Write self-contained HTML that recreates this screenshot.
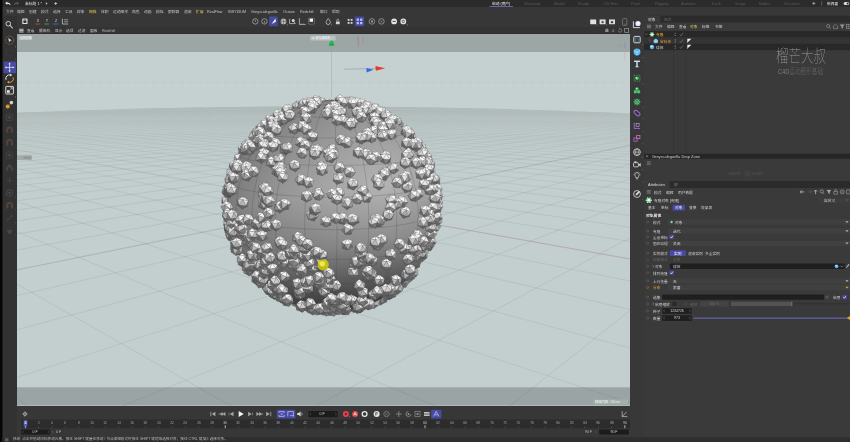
<!DOCTYPE html>
<html lang="zh-CN"><head><meta charset="utf-8"><title>Cinema 4D</title>
<style>
html,body{margin:0;padding:0;background:#383838;}
body{width:850px;height:442px;overflow:hidden;position:relative;font-family:"Liberation Sans","Noto Sans CJK SC",sans-serif;}
#root{position:absolute;left:0;top:0;width:850px;height:442px;overflow:hidden;}
#chrome{position:absolute;left:0;top:0;display:block;}
#txt{position:absolute;left:0;top:0;width:850px;height:442px;will-change:transform;}
.t{position:absolute;white-space:nowrap;line-height:1.24;transform-origin:0 0;transform:scale(.25);letter-spacing:0;}
.tc{transform:scale(.25) translateX(-50%);}
.tr{transform:scale(.25) translateX(-100%);}
.wm{position:absolute;white-space:nowrap;font-family:"Noto Sans CJK SC","Liberation Sans",sans-serif;font-weight:100;font-size:50px;line-height:1;color:#9a9a9a;transform-origin:0 0;transform:scale(.25,.33);letter-spacing:0px;}
.wm2{position:absolute;white-space:nowrap;font-family:"Liberation Sans","Noto Sans CJK SC",sans-serif;font-weight:100;font-size:26px;line-height:1;color:#7e7e7e;transform-origin:0 0;transform:scale(.217,.31);}

</style></head>
<body><div id="root">
<svg id="chrome" width="850" height="442" viewBox="0 0 850 442">
<rect x="0" y="0" width="850" height="442" fill="#383838"/>
<rect x="0" y="0" width="850" height="6.9" fill="#2b2b2b"/>
<rect x="2.5" y="6.9" width="627.5" height="27.2" fill="#373737"/>
<rect x="2.5" y="27.2" width="627.5" height="6.9" fill="#343434"/>
<rect x="2.5" y="33.2" width="627.5" height="1" fill="#2d2d2d"/>
<rect x="2.5" y="16" width="14.5" height="421.5" fill="#323232"/>
<rect x="630" y="16" width="14" height="421.5" fill="#383838"/>
<rect x="644" y="15.6" width="206" height="422" fill="#3a3a3a"/>
<rect x="0" y="0" width="2.5" height="442" fill="#060606"/>
<rect x="17" y="405.5" width="613" height="32" fill="#373737"/>
<rect x="21.2" y="419.6" width="608.8" height="8.6" fill="#2c2c2c"/>
<rect x="2.5" y="437.4" width="847.5" height="4.6" fill="#2e2e2e"/>
<g transform="translate(7.8 3.5)"><path d="M-2.6 -0.4L-0.6 -2V-0.9C1.6 -0.9 2.8 0.2 2.8 2C2.2 0.9 1.2 0.4 -0.6 0.4V1.4z" fill="#e6e6e6"/></g>
<g transform="translate(16.5 3.5) scale(-1 1)"><path d="M-2.6 -0.4L-0.6 -2V-0.9C1.6 -0.9 2.8 0.2 2.8 2C2.2 0.9 1.2 0.4 -0.6 0.4V1.4z" fill="#5a5a5a"/></g>
<path d="M45.9 2.2L47.6 3.5L45.9 4.8z" fill="#d0d0d0"/>
<path d="M54.2 3.5H57.2M55.7 2V5" stroke="#e0e0e0" stroke-width="0.7" fill="none"/>
<rect x="489.5" y="6" width="23.5" height="0.7" fill="#7d80d8"/>
<path d="M812.2 3.4H815.4M813.8 1.8V5" stroke="#cfcfcf" stroke-width="0.6" fill="none"/>
<rect x="821.6" y="1.2" width="0.5" height="4.6" fill="#8a8a8a"/>
<rect x="843.6" y="1.9" width="5.6" height="3" rx="1.5" fill="#dcdcdc"/><circle cx="847.6" cy="3.4" r="1" fill="#2b2b2b"/>
<g transform="translate(9.2 24.6)"><circle cx="-0.9" cy="-0.9" r="2.3" fill="none" stroke="#d8d8d8" stroke-width="0.9"/><path d="M0.9 0.9L3.2 3.4" stroke="#d8d8d8" stroke-width="1.1" stroke-linecap="round"/></g>
<g transform="translate(24.9 21.4)"><rect x="-2.6" y="-2.8" width="5.2" height="5.4" rx="0.5" fill="#e4e4e4"/><rect x="-1.5" y="-1" width="3" height="2.6" fill="#333"/><path d="M-0.9 -1V-1.6A0.9 0.9 0 0 1 0.9 -1.6V-1" fill="none" stroke="#333" stroke-width="0.5"/></g>
<g transform="translate(37.6 21.4)"><path d="M-2.4 2.6H2.4" stroke="#c8473f" stroke-width="0.8"/></g>
<g transform="translate(46.7 21.4)"><path d="M-2.4 2.6H2.4" stroke="#4fa35a" stroke-width="0.8"/></g>
<g transform="translate(55.9 21.4)"><path d="M-2.4 2.6H2.4" stroke="#4a78c8" stroke-width="0.8"/></g>
<g transform="translate(65.2 21.4)"><path d="M-2.8 -2.8V2.6H3" stroke="#d8d8d8" stroke-width="0.7" fill="none"/><path d="M-1 -1.6H2.8M-1 0.4H2.8" stroke="#d8d8d8" stroke-width="0.6"/></g>
<g transform="translate(255.3 21.4)"><circle r="2.7" fill="none" stroke="#b4b4b4" stroke-width="0.7"/><path d="M0 -1.6V0.4" stroke="#c4c4c4" stroke-width="0.6"/></g>
<g transform="translate(264.4 21.4)"><circle r="2.7" fill="none" stroke="#b4b4b4" stroke-width="0.7"/><path d="M0 -0.4V1.6" stroke="#c4c4c4" stroke-width="0.6"/></g>
<rect x="269.2" y="16.6" width="8.6" height="9.6" rx="0.8" fill="#464a9e"/>
<path d="M271.6 24L275.4 18.6L275.9 21.8z" fill="#f2f2f2"/>
<g transform="translate(283.5 21.4)"><circle r="2.9" fill="#bcbcbc"/><path d="M-2.9 0H2.9M0 -2.9V2.9M-2 -2A3.5 3.5 0 0 0 -2 2M2 -2A3.5 3.5 0 0 1 2 2" fill="none" stroke="#4a4a4a" stroke-width="0.45"/><path d="M3.2 3.2L4.2 4.2V3.2z" fill="#bbb"/></g>
<g transform="translate(292.4 21.4)"><path d="M-2.8 -2.6V2.2H2.4" stroke="#d0d0d0" stroke-width="0.7" fill="none"/><circle cx="0.8" cy="-0.8" r="1.5" fill="#d8d8d8"/><path d="M1.6 0.4L3 2.4" stroke="#d8d8d8" stroke-width="0.8"/></g>
<path d="M299.4 18.2V24.4H305.6" stroke="#d8d8d8" stroke-width="0.7" fill="none"/><path d="M301.4 24.4V23.2M303.4 24.4V23.2" stroke="#9a9a9a" stroke-width="0.4"/>
<rect x="308.4" y="18.2" width="6" height="6" rx="0.6" fill="none" stroke="#8c8c8c" stroke-width="0.5"/><rect x="309.6" y="18.6" width="3.4" height="3.2" fill="#f4f4f4"/>
<g transform="translate(328.2 21.4)"><path d="M0 -2.9C1.4 -1 2.1 0 2.1 1A2.1 2.1 0 0 1 -2.1 1C-2.1 0 -1.4 -1 0 -2.9z" fill="none" stroke="#d8d8d8" stroke-width="0.7"/><path d="M2.6 3L3.6 4V3z" fill="#bbb"/></g>
<g transform="translate(337.8 21.6)"><rect x="-1.9" y="-0.2" width="3.8" height="2.8" rx="0.4" fill="#d4d4d4"/><path d="M-1 -0.2V-1.4A1 1 0 0 1 1 -1.4V-0.2" fill="none" stroke="#d4d4d4" stroke-width="0.6"/></g>
<g transform="translate(350.1 21.4)"><rect x="-2.45" y="-2.45" width="1.9" height="1.9" fill="#d2d2d2"/><rect x="-2.45" y="0.55" width="1.9" height="1.9" fill="#d2d2d2"/><rect x="0.55" y="-2.45" width="1.9" height="1.9" fill="#d2d2d2"/><rect x="0.55" y="0.55" width="1.9" height="1.9" fill="#d2d2d2"/></g>
<rect x="354.8" y="16.6" width="9.4" height="9.6" rx="0.8" fill="#464a9e"/>
<g transform="translate(359.5 21.4)"><rect x="-2.85" y="-2.85" width="2.3" height="2.3" fill="#b9bdf2"/><rect x="-2.85" y="0.55" width="2.3" height="2.3" fill="#b9bdf2"/><rect x="0.55" y="-2.85" width="2.3" height="2.3" fill="#b9bdf2"/><rect x="0.55" y="0.55" width="2.3" height="2.3" fill="#b9bdf2"/></g>
<g transform="translate(371.9 21.4)"><circle r="2.8" fill="none" stroke="#9c9c9c" stroke-width="0.8"/><circle r="1.1" fill="#9c9c9c"/></g>
<g transform="translate(381.4 21.4)"><circle r="2.8" fill="none" stroke="#9c9c9c" stroke-width="0.8"/><path d="M-1 -1L1 1M1 -1L-1 1" stroke="#9c9c9c" stroke-width="0.6"/></g>
<g transform="translate(394.1 21.4)"><circle r="2.9" fill="#e2e2e2"/><path d="M-1.5 0H1.5" stroke="#333" stroke-width="0.9"/></g>
<g transform="translate(403.3 21.4)"><circle r="2.9" fill="#e2e2e2"/><circle r="1.2" fill="none" stroke="#333" stroke-width="0.7"/></g>
<path d="M406.6 24.6L407.6 25.6V24.6z" fill="#cfcfcf"/>
<g transform="translate(593.2 22)"><rect x="-3" y="-2.4" width="6" height="4.6" rx="0.4" fill="#e2e2e2"/><path d="M-3 -2.4H3" stroke="#9a9a9a" stroke-width="0.5"/><path d="M3.2 2.6L4.2 3.6V2.6z" fill="#aaa"/></g>
<g transform="translate(602.6 22)"><rect x="-3" y="-2.4" width="6" height="4.6" rx="0.4" fill="#e2e2e2"/><path d="M-3 -2.4H3" stroke="#9a9a9a" stroke-width="0.5"/><circle cy="0.2" r="1.1" fill="#444"/><path d="M3.2 2.6L4.2 3.6V2.6z" fill="#aaa"/></g>
<g transform="translate(612 22)"><rect x="-3" y="-2.4" width="6" height="4.6" rx="0.4" fill="#e2e2e2"/><path d="M-3 -2.4H3" stroke="#9a9a9a" stroke-width="0.5"/><rect x="-1.2" y="-0.8" width="2.4" height="2" fill="#444"/></g>
<rect x="622.6" y="18.6" width="4.2" height="6.8" rx="0.8" fill="none" stroke="#8e8e8e" stroke-width="0.6"/><path d="M623.8 24.2H625.6" stroke="#8e8e8e" stroke-width="0.5"/>
<g transform="translate(606.9 30.5)"><path d="M-1.6 1.4V-0.4A1.6 1.6 0 0 1 1.6 -0.4V1.4z" fill="#8f8f8f"/></g>
<g transform="translate(613.2 30.5)"><path d="M0 -1.8V1.2M-1.4 0L0 1.6L1.4 0" stroke="#8f8f8f" stroke-width="0.6" fill="none"/></g>
<g transform="translate(620 30.5)"><path d="M-1.6 -0.2A1.7 1.7 0 1 0 0 -1.7" stroke="#8f8f8f" stroke-width="0.6" fill="none"/><path d="M0 -2.6L-1.2 -1.7L0 -0.8z" fill="#8f8f8f"/></g>
<g transform="translate(626.7 30.5)"><rect x="-2" y="-2" width="4" height="4" fill="none" stroke="#aaa" stroke-width="0.6"/></g>
<path d="M19.2 29.2H23.6M19.2 30.6H23.6M19.2 32H23.6" stroke="#e8e8e8" stroke-width="0.8"/>
<g transform="translate(9.6 40.2)"><circle r="4.2" fill="none" stroke="#8e7146" stroke-width="0.7" stroke-dasharray="2.2 0.8"/><path d="M-1.3 -2.2L2.2 0.2L0.4 0.5L-0.4 2.2z" fill="#e4e4e4"/></g>
<path d="M15 46.4L16 47.4V46.4z" fill="#9a9a9a"/>
<g transform="translate(9.6 52.8)"><rect x="-3.2" y="-3.2" width="6.4" height="6.4" fill="none" stroke="#474747" stroke-width="0.6" stroke-dasharray="1.4 1"/></g>
<path d="M15 58.8L16 59.8V58.8z" fill="#777"/>
<rect x="3.6" y="61.6" width="12.4" height="11.6" rx="0.8" fill="#474ba2"/>
<g transform="translate(9.6 67.4)"><path d="M0 -4.2V4.2M-4.2 0H4.2" stroke="#dfe1ff" stroke-width="0.8"/><path d="M0 -4.8L-1.2 -3.2H1.2zM0 4.8L-1.2 3.2H1.2zM-4.8 0L-3.2 -1.2V1.2zM4.8 0L3.2 -1.2V1.2z" fill="#dfe1ff"/></g>
<g transform="translate(9.6 78.6)"><path d="M-3.6 1.2A3.8 3.8 0 0 1 1.2 -3.6" fill="none" stroke="#e6e6e6" stroke-width="1"/><path d="M3.6 -1.2A3.8 3.8 0 0 1 -1.2 3.6" fill="none" stroke="#e09a3a" stroke-width="1"/><path d="M0.6 -5L2.6 -3.4L0.6 -2.2z" fill="#e6e6e6"/><path d="M-0.6 5L-2.6 3.4L-0.6 2.2z" fill="#e09a3a"/></g>
<g transform="translate(9.6 90.2)"><rect x="-3.8" y="-3.8" width="7.6" height="7.6" rx="0.5" fill="none" stroke="#e6e6e6" stroke-width="0.9"/><rect x="-2.6" y="0" width="2.8" height="2.6" fill="#e6e6e6"/><path d="M0.4 -0.4L2.4 -2.4M0.8 -2.6H2.6V-0.8" stroke="#e6e6e6" stroke-width="0.6" fill="none"/></g>
<path d="M15 96.6L16 97.6V96.6z" fill="#9a9a9a"/>
<g transform="translate(9.6 104.6)"><circle cx="1.8" cy="-2" r="1.8" fill="#d0d0d0"/><circle cx="-1.9" cy="1.9" r="2" fill="#dc9a30"/><path d="M-0.2 0.2L0.6 -0.6" stroke="#aaa" stroke-width="0.5"/></g>
<g transform="translate(9.6 117.4)"><rect x="-3.2" y="-3.2" width="6.4" height="6.4" rx="0.6" fill="none" stroke="#484848" stroke-width="0.8"/><rect x="-1.4" y="-1.4" width="2.8" height="2.8" fill="#484848"/></g>
<g transform="translate(9.6 130)"><path d="M-3.4 2.8V-0.4A3.4 3.4 0 0 1 3.4 -0.4V2.8H1.4V-0.2A1.4 1.4 0 0 0 -1.4 -0.2V2.8z" fill="#50443c"/></g>
<g transform="translate(9.6 142.6)"><path d="M-3.4 2.8V-0.4A3.4 3.4 0 0 1 3.4 -0.4V2.8H1.4V-0.2A1.4 1.4 0 0 0 -1.4 -0.2V2.8z" fill="#50443c"/></g>
<g transform="translate(9.6 155.2)"><rect x="-3.2" y="-3.2" width="6.4" height="6.4" rx="0.6" fill="none" stroke="#464646" stroke-width="0.8"/><rect x="-1.4" y="-1.4" width="2.8" height="2.8" fill="#464646"/></g>
<g transform="translate(9.6 167.8)"><path d="M-3.4 2.6C-3 -1.6 -0.8 -3.2 0 -3.2C0.8 -3.2 3 -1.6 3.4 2.6L1.6 2.6C1.2 0 0.6 -1.2 0 -1.2C-0.6 -1.2 -1.2 0 -1.6 2.6z" fill="#484848"/></g>
<g transform="translate(9.6 180.4)"><path d="M0 -3V3M-3 0H3" stroke="#454545" stroke-width="0.8"/></g>
<g transform="translate(9.6 193)"><circle r="3.2" fill="none" stroke="#4c4c4c" stroke-width="0.9"/><circle r="1.2" fill="#4c4c4c"/><path d="M5.4 3.8L6.4 4.8V3.8z" fill="#6a6a6a"/></g>
<g transform="translate(9.6 205.6)"><path d="M-3.4 2.8V-0.4A3.4 3.4 0 0 1 3.4 -0.4V2.8H1.4V-0.2A1.4 1.4 0 0 0 -1.4 -0.2V2.8z" fill="#54453a"/><path d="M5.4 3.8L6.4 4.8V3.8z" fill="#6a6a6a"/></g>
<g transform="translate(9.6 218.2)"><path d="M-3 3L2.6 -2.6M1.4 -3.4L3.4 -1.4" stroke="#484848" stroke-width="0.9"/><path d="M5.4 3.8L6.4 4.8V3.8z" fill="#6a6a6a"/></g>
<g transform="translate(9.6 230.8)"><path d="M-2.8 -1H2.8L1.6 3H-1.6z" fill="#454545"/><path d="M5.4 3.8L6.4 4.8V3.8z" fill="#6a6a6a"/></g>
<g transform="translate(637 24.4) scale(0.9)"><path d="M-4 -3.4V3.6H3.2" fill="none" stroke="#d4d4d8" stroke-width="1.1"/><circle cx="1.1" cy="-1" r="2.9" fill="#e6e8fb"/><circle cx="1.6" cy="-1.5" r="1.2" fill="#ffffff"/></g>
<g transform="translate(637 39.6) scale(0.86)"><rect x="-3.7" y="-3.7" width="7.4" height="7.4" rx="1" fill="none" stroke="#cfe0e8" stroke-width="1.1"/><rect x="-1.9" y="-1.9" width="3.8" height="3.8" fill="#31414a" stroke="#7d98a6" stroke-width="0.4"/></g>
<g transform="translate(637 52) scale(0.86)"><circle r="4" fill="#58b8f0"/><path d="M-3.4 -1.6L0 0.4L3.4 -1.6M0 0.4V4" stroke="#e8f6ff" stroke-width="0.6" fill="none"/></g>
<g transform="translate(637 63.9) scale(0.86)"><path d="M-3.4 -3.6H3.4V-2.2H0.8V3H2V4H-2V3H-0.8V-2.2H-3.4z" fill="#dfe9f2"/><path d="M-3.4 -3.6H3.4" stroke="#7cc0f0" stroke-width="0.6"/></g>
<g transform="translate(637 78.2) scale(0.86)"><rect x="-3.4" y="-3.4" width="6.8" height="6.8" fill="none" stroke="#46c86a" stroke-width="0.7" stroke-dasharray="1.6 1"/><circle r="2.1" fill="#46c86a"/><circle cx="-0.6" cy="-0.6" r="0.7" fill="#d8ffe0"/></g>
<g transform="translate(637 90.4) scale(0.86)"><circle cx="0" cy="-1.8" r="2" fill="#46c86a"/><circle cx="-1.9" cy="1.5" r="2" fill="#46c86a"/><circle cx="1.9" cy="1.5" r="2" fill="#46c86a"/><circle cx="-0.4" cy="-2.2" r="0.6" fill="#d8ffe0"/></g>
<g transform="translate(637 101.9) scale(0.86)"><circle r="2.4" fill="none" stroke="#46c86a" stroke-width="1.5"/><path d="M2.8 0L4 0" stroke="#46c86a" stroke-width="1.1"/><path d="M1.98 1.98L2.83 2.83" stroke="#46c86a" stroke-width="1.1"/><path d="M0 2.8L0 4" stroke="#46c86a" stroke-width="1.1"/><path d="M-1.98 1.98L-2.83 2.83" stroke="#46c86a" stroke-width="1.1"/><path d="M-2.8 0L-4 0" stroke="#46c86a" stroke-width="1.1"/><path d="M-1.98 -1.98L-2.83 -2.83" stroke="#46c86a" stroke-width="1.1"/><path d="M0 -2.8L0 -4" stroke="#46c86a" stroke-width="1.1"/><path d="M1.98 -1.98L2.83 -2.83" stroke="#46c86a" stroke-width="1.1"/><circle r="0.9" fill="#e8ffe8"/></g>
<g transform="translate(637 113.1) scale(0.86)"><rect x="-4" y="-2" width="8" height="4" rx="2" transform="rotate(40)" fill="none" stroke="#a56ee0" stroke-width="1.1"/></g>
<g transform="translate(637 125.7) scale(0.86)"><path d="M-3.2 -3.6V3.2H3.6" fill="none" stroke="#a56ee0" stroke-width="1"/><rect x="-1" y="-2.4" width="3.4" height="3.4" fill="none" stroke="#c9a4f0" stroke-width="0.7"/></g>
<g transform="translate(637 138.5) scale(0.86)"><rect x="-3.6" y="-0.6" width="3.8" height="3.8" fill="none" stroke="#a56ee0" stroke-width="0.9"/><rect x="-0.4" y="-3.6" width="3.8" height="3.8" fill="none" stroke="#e070b8" stroke-width="0.9"/></g>
<g transform="translate(637 152.1) scale(0.86)"><circle r="3.9" fill="none" stroke="#e4e4e4" stroke-width="0.9"/><ellipse rx="1.7" ry="3.9" fill="none" stroke="#e4e4e4" stroke-width="0.6"/><path d="M-3.9 0H3.9" stroke="#e4e4e4" stroke-width="0.6"/></g>
<g transform="translate(637 164.6) scale(0.86)"><rect x="-4" y="-2.2" width="5.6" height="4.8" rx="0.7" fill="none" stroke="#e4e4e4" stroke-width="0.9"/><path d="M1.8 0.2L4.2 -1.8V2.4z" fill="#e4e4e4"/><rect x="-3" y="-3.8" width="2.4" height="1.4" fill="#e4e4e4"/></g>
<g transform="translate(637 176) scale(0.86)"><path d="M-1.2 2.2C-1.2 0.8 -2.6 0.2 -2.6 -1.4A2.6 2.6 0 0 1 2.6 -1.4C2.6 0.2 1.2 0.8 1.2 2.2z" fill="none" stroke="#e4e4e4" stroke-width="0.8"/><path d="M-1 3.4H1" stroke="#e4e4e4" stroke-width="0.8"/><path d="M-4.4 -1.4H-3.6M3.6 -1.4H4.4M0 -5V-4.4M-3 -4.2L-2.5 -3.7M3 -4.2L2.5 -3.7" stroke="#e4e4e4" stroke-width="0.5"/></g>
<g transform="translate(637 194) scale(0.86)"><circle r="4" fill="none" stroke="#e4e4e4" stroke-width="0.9"/><path d="M-1.8 1.8L-1.2 -0.2L2.2 -3.4L3.4 -2.2L0.2 1.2z" fill="#e4e4e4"/></g>
<path d="M642.2 44.6L643.2 45.6V44.6z" fill="#8a8a8a"/>
<path d="M642.2 57.2L643.2 58.2V57.2z" fill="#8a8a8a"/>
<path d="M642.2 83.4L643.2 84.4V83.4z" fill="#8a8a8a"/>
<path d="M642.2 106.8L643.2 107.8V106.8z" fill="#8a8a8a"/>
<path d="M642.2 118.4L643.2 119.4V118.4z" fill="#8a8a8a"/>
<path d="M642.2 131L643.2 132V131z" fill="#8a8a8a"/>
<path d="M642.2 143.6L643.2 144.6V143.6z" fill="#8a8a8a"/>
<path d="M642.2 157L643.2 158V157z" fill="#8a8a8a"/>
<path d="M642.2 169.4L643.2 170.4V169.4z" fill="#8a8a8a"/>
<path d="M642.2 181.4L643.2 182.4V181.4z" fill="#8a8a8a"/>
<path d="M642.2 199.6L643.2 200.6V199.6z" fill="#8a8a8a"/>
<rect x="644" y="15.6" width="206" height="7" fill="#2b2b2b"/>
<rect x="644" y="15.6" width="16.4" height="7" fill="#3a3a3a"/>
<path d="M647 25.2H651M647 26.5H651M647 27.8H651" stroke="#8e8e8e" stroke-width="0.7"/>
<circle cx="828.2" cy="26" r="1.6" fill="none" stroke="#9a9a9a" stroke-width="0.6"/><path d="M829.4 27.3L830.8 28.8" stroke="#9a9a9a" stroke-width="0.6"/>
<path d="M833.4 28.6V26L835.5 24.4L837.6 26V28.6z" fill="none" stroke="#9a9a9a" stroke-width="0.55"/>
<path d="M839.8 24.6H844.6L842.9 26.8V28.8L841.5 28V26.8z" fill="#9a9a9a"/>
<rect x="846.4" y="24.4" width="4.2" height="4.2" fill="none" stroke="#9a9a9a" stroke-width="0.55"/><path d="M848.5 24.4V28.6M846.4 26.5H850" stroke="#9a9a9a" stroke-width="0.4"/>
<rect x="644" y="31.1" width="206" height="6.4" fill="#282828"/>
<rect x="644" y="37.5" width="206" height="6.3" fill="#343434"/>
<rect x="644" y="43.8" width="206" height="6.4" fill="#282828"/>
<rect x="673.2" y="30.4" width="0.4" height="122" fill="#2f2f2f"/>
<rect x="685.6" y="30.4" width="0.4" height="122" fill="#303030"/>
<path d="M645.3 33.6L646.3 34.9L647.3 33.6" stroke="#8a8a8a" stroke-width="0.5" fill="none"/>
<g transform="translate(652 34.4) scale(0.9)"><circle r="2.1" fill="#6cc884"/><circle r="1.15" fill="#f4fff4"/><circle cx="2.1" cy="0" r="0.6" fill="#b8ecc4"/><circle cx="1.05" cy="1.82" r="0.6" fill="#b8ecc4"/><circle cx="-1.05" cy="1.82" r="0.6" fill="#b8ecc4"/><circle cx="-2.1" cy="0" r="0.6" fill="#b8ecc4"/><circle cx="-1.05" cy="-1.82" r="0.6" fill="#b8ecc4"/><circle cx="1.05" cy="-1.82" r="0.6" fill="#b8ecc4"/></g>
<path d="M649.2 37.5V41H651.4" stroke="#6a6a6a" stroke-width="0.4" fill="none"/>
<g transform="translate(655.8 41)"><path d="M0 -2.3L2.2 -0.9V1.3L0 2.4L-2.2 1.3V-0.9z" fill="#7cc4f0"/><path d="M0 -2.3V0.2L-2.2 1.3M0 0.2L2.2 1.3" stroke="#d8f0ff" stroke-width="0.4" fill="none"/></g>
<g transform="translate(652 47)"><circle r="2.2" fill="#5aaef0"/><ellipse cx="-0.44" cy="-0.55" rx="1.21" ry="0.88" fill="#d4ecff"/></g>
<circle cx="675.2" cy="33.3" r="0.55" fill="#9a9a9a"/><circle cx="675.2" cy="35.5" r="0.55" fill="#9a9a9a"/>
<path d="M679.8 34.6L680.9 35.9L683.2 32.8" stroke="#8e8e8e" stroke-width="0.55" fill="none"/>
<circle cx="675.2" cy="39.9" r="0.55" fill="#9a9a9a"/><circle cx="675.2" cy="42.1" r="0.55" fill="#9a9a9a"/>
<path d="M679.8 41.2L680.9 42.5L683.2 39.4" stroke="#8e8e8e" stroke-width="0.55" fill="none"/>
<circle cx="675.2" cy="45.9" r="0.55" fill="#9a9a9a"/><circle cx="675.2" cy="48.1" r="0.55" fill="#9a9a9a"/>
<path d="M679.8 47.2L680.9 48.5L683.2 45.4" stroke="#8e8e8e" stroke-width="0.55" fill="none"/>
<path d="M687.3 43.3V38.8H691.4L688 41.9z" fill="#ececec"/>
<path d="M687.3 49.3V44.8H691.4L688 47.9z" fill="#ececec"/>
<rect x="644" y="153.8" width="206" height="5" fill="#262626"/>
<path d="M646.2 155.4L647.8 157.2M647.8 155.4L646.2 157.2" stroke="#c0c0c0" stroke-width="0.5"/>
<path d="M646.8 161.8H650.8M646.8 163.1H650.8M646.8 164.4H650.8" stroke="#8a8a8a" stroke-width="0.6"/>
<circle cx="747.6" cy="173.4" r="2.6" fill="none" stroke="#4d4d4d" stroke-width="0.7"/><circle cx="747.6" cy="173.4" r="0.9" fill="#4d4d4d"/>
<rect x="644" y="181" width="206" height="7" fill="#2b2b2b"/>
<rect x="644" y="181" width="25.6" height="7" fill="#3a3a3a"/>
<path d="M674 183.4H677.6M674 184.6H677.6M674 185.8H677.6" stroke="#6e6e6e" stroke-width="0.6"/>
<path d="M646.8 190.6H650.8M646.8 191.9H650.8M646.8 193.2H650.8" stroke="#8e8e8e" stroke-width="0.7"/>
<path d="M804.4 191.9H800.2M801.8 190.3L800.2 191.9L801.8 193.5" stroke="#c8c8c8" stroke-width="0.7" fill="none"/>
<path d="M807.6 191.9H811.8M810.2 190.3L811.8 191.9L810.2 193.5" stroke="#5a5a5a" stroke-width="0.7" fill="none"/>
<path d="M815.6 194.2V190M814 191.6L815.6 190L817.2 191.6" stroke="#c8c8c8" stroke-width="0.7" fill="none"/>
<circle cx="821.8" cy="191.4" r="1.6" fill="none" stroke="#b0b0b0" stroke-width="0.6"/><path d="M823 192.7L824.2 194" stroke="#b0b0b0" stroke-width="0.6"/>
<path d="M826.6 190H831.2L829.6 192V194L828.2 193.2V192z" fill="#b0b0b0"/>
<rect x="833.8" y="191.4" width="3.8" height="2.8" rx="0.4" fill="none" stroke="#b0b0b0" stroke-width="0.55"/><path d="M834.6 191.4V190.6A1.1 1.1 0 0 1 836.8 190.6V191.4" fill="none" stroke="#b0b0b0" stroke-width="0.5"/>
<circle cx="842.2" cy="191.9" r="2" fill="none" stroke="#b0b0b0" stroke-width="0.55"/><path d="M842.2 190.6V193.2" stroke="#b0b0b0" stroke-width="0.5"/>
<rect x="846.4" y="190" width="3.6" height="3.8" rx="0.5" fill="none" stroke="#b0b0b0" stroke-width="0.55"/>
<g transform="translate(648.8 200.2) scale(1.2)"><circle r="2.1" fill="#6cc884"/><circle r="1.15" fill="#f4fff4"/><circle cx="2.1" cy="0" r="0.6" fill="#b8ecc4"/><circle cx="1.05" cy="1.82" r="0.6" fill="#b8ecc4"/><circle cx="-1.05" cy="1.82" r="0.6" fill="#b8ecc4"/><circle cx="-2.1" cy="0" r="0.6" fill="#b8ecc4"/><circle cx="-1.05" cy="-1.82" r="0.6" fill="#b8ecc4"/><circle cx="1.05" cy="-1.82" r="0.6" fill="#b8ecc4"/></g>
<path d="M845.4 199.5L847 201.1L848.6 199.5z" fill="#8a8a8a"/>
<rect x="818" y="197.4" width="32" height="5.6" rx="0.6" fill="#404040" fill-opacity="0.6"/>
<rect x="672.6" y="204.8" width="12.4" height="5.8" rx="0.7" fill="#474ba2"/>
<circle cx="647.6" cy="222" r="1.05" fill="none" stroke="#6e6e6e" stroke-width="0.45"/>
<rect x="668" y="219.3" width="182" height="5.4" fill="#404040"/>
<circle cx="671.6" cy="222" r="1.3" fill="#5fc46a"/><circle cx="671.6" cy="222" r="0.5" fill="#e8ffe8"/>
<path d="M845.3 221.2L847 222.9L848.7 221.2z" fill="#b4b4b4"/>
<circle cx="647.6" cy="231" r="1.05" fill="none" stroke="#6e6e6e" stroke-width="0.45"/>
<rect x="668" y="228.3" width="182" height="5.4" fill="#404040"/>
<path d="M845.3 230.2L847 231.9L848.7 230.2z" fill="#b4b4b4"/>
<circle cx="647.6" cy="236.9" r="1.05" fill="none" stroke="#6e6e6e" stroke-width="0.45"/>
<rect x="669.4" y="234.7" width="4.4" height="4.4" rx="0.6" fill="#474ba2"/>
<path d="M670.3 236.9L671.3 238L673 235.7" fill="none" stroke="#fff" stroke-width="0.65"/>
<circle cx="647.6" cy="243.4" r="1.05" fill="none" stroke="#6e6e6e" stroke-width="0.45"/>
<rect x="668" y="240.7" width="182" height="5.4" fill="#404040"/>
<path d="M845.3 242.6L847 244.3L848.7 242.6z" fill="#b4b4b4"/>
<circle cx="647.6" cy="253.2" r="1.05" fill="none" stroke="#6e6e6e" stroke-width="0.45"/>
<rect x="669.8" y="250.3" width="16" height="5.8" rx="0.7" fill="#474ba2"/>
<circle cx="647.6" cy="259.7" r="1.05" fill="none" stroke="#555" stroke-width="0.45"/>
<circle cx="647.6" cy="266.3" r="1.05" fill="none" stroke="#6e6e6e" stroke-width="0.45"/>
<path d="M652.6 265.3L653.8 266.3L652.6 267.3" fill="none" stroke="#b0b0b0" stroke-width="0.5"/>
<rect x="669.8" y="263.6" width="175" height="5.4" rx="0.6" fill="#1f1f1f"/>
<g transform="translate(836.6 266.3)"><circle r="1.9" fill="#5aaef0"/><ellipse cx="-0.38" cy="-0.47" rx="1.04" ry="0.76" fill="#d4ecff"/></g>
<path d="M840.6 265.7L841.8 267L843 265.7" fill="none" stroke="#b8b8b8" stroke-width="0.5"/>
<path d="M846.4 268.1L849.4 264.7L848.6 264.1L846 267.5z" fill="#c8c8c8"/>
<circle cx="647.6" cy="272.8" r="1.05" fill="none" stroke="#6e6e6e" stroke-width="0.45"/>
<rect x="669.4" y="270.6" width="4.4" height="4.4" rx="0.6" fill="#474ba2"/>
<path d="M670.3 272.8L671.3 273.9L673 271.6" fill="none" stroke="#fff" stroke-width="0.65"/>
<circle cx="647.6" cy="281" r="1.05" fill="none" stroke="#6e6e6e" stroke-width="0.45"/>
<rect x="668" y="278.3" width="182" height="5.4" fill="#404040"/>
<path d="M845.3 280.2L847 281.9L848.7 280.2z" fill="#b4b4b4"/>
<circle cx="647.6" cy="287.5" r="1.05" fill="none" stroke="#c8862a" stroke-width="0.45"/>
<rect x="668" y="284.8" width="182" height="5.4" fill="#404040"/>
<path d="M845.3 286.7L847 288.4L848.7 286.7z" fill="#e0a040"/>
<circle cx="647.6" cy="297.1" r="1.05" fill="none" stroke="#6e6e6e" stroke-width="0.45"/>
<rect x="662.3" y="294.4" width="161.7" height="5.4" rx="0.6" fill="#1f1f1f"/>
<circle cx="827.2" cy="297.1" r="1.2" fill="none" stroke="#7a7a7a" stroke-width="0.5"/>
<rect x="842.4" y="294.9" width="4.4" height="4.4" rx="0.6" fill="#474ba2"/>
<path d="M843.3 297.1L844.3 298.2L846 295.9" fill="none" stroke="#fff" stroke-width="0.65"/>
<circle cx="647.6" cy="303.9" r="1.05" fill="none" stroke="#6e6e6e" stroke-width="0.45"/>
<path d="M652.6 302.9L653.8 303.9L652.6 304.9" fill="none" stroke="#b0b0b0" stroke-width="0.5"/>
<rect x="672.4" y="301.7" width="4.4" height="4.4" rx="0.6" fill="#2a2a2a"/>
<circle cx="685.6" cy="303.9" r="1.2" fill="none" stroke="#555" stroke-width="0.5"/>
<rect x="700" y="301.2" width="28.4" height="5.4" rx="0.6" fill="#444444"/>
<rect x="731" y="301.7" width="61" height="4.4" rx="0.4" fill="#535353"/>
<rect x="792" y="303.6" width="58" height="0.6" fill="#2a2a2a"/>
<rect x="791.4" y="301.7" width="0.9" height="4.4" fill="#777"/>
<circle cx="647.6" cy="310.9" r="1.05" fill="none" stroke="#6e6e6e" stroke-width="0.45"/>
<rect x="662.3" y="308.1" width="29.4" height="5.6" rx="0.7" fill="#1f1f1f"/>
<path d="M664.6 310L663.6 310.9L664.6 311.8" fill="none" stroke="#8a8a8a" stroke-width="0.5"/><path d="M689.4 310L690.4 310.9L689.4 311.8" fill="none" stroke="#8a8a8a" stroke-width="0.5"/>
<circle cx="647.6" cy="318.1" r="1.05" fill="none" stroke="#6e6e6e" stroke-width="0.45"/>
<rect x="662.3" y="315.3" width="29.4" height="5.6" rx="0.7" fill="#1f1f1f"/>
<path d="M664.6 317.2L663.6 318.1L664.6 319" fill="none" stroke="#8a8a8a" stroke-width="0.5"/><path d="M689.4 317.2L690.4 318.1L689.4 319" fill="none" stroke="#8a8a8a" stroke-width="0.5"/>
<rect x="693.4" y="317.6" width="154" height="1" fill="#6a6ec4"/>
<path d="M846.6 318.1L850 316.1V320.1z" fill="#f09a30"/>
<path d="M25 411.8L27.2 414L25 416.2L22.8 414z" fill="none" stroke="#e0e0e0" stroke-width="0.7"/><circle cx="25" cy="414" r="0.7" fill="#e0e0e0"/>
<g transform="translate(213 414)"><path d="M-2.2 -2.2V2.2" stroke="#a8a8a8" stroke-width="0.8"/><path d="M2.4 -2.2L-1.2 0L2.4 2.2z" fill="#a8a8a8"/></g>
<g transform="translate(222.4 414)"><path d="M0.2 -2L-2.8 0L0.2 2zM3 -2L0 0L3 2z" fill="#a8a8a8"/><circle cx="-3.2" r="0.6" fill="#a8a8a8"/></g>
<g transform="translate(231.7 414)"><path d="M1.8 -2.2L-1.8 0L1.8 2.2z" fill="#a8a8a8"/><path d="M-2.6 -1.4V1.4" stroke="#a8a8a8" stroke-width="0.5"/></g>
<g transform="translate(240.7 414)"><path d="M-2 -3L3 0L-2 3z" fill="#f2f2f2"/></g>
<g transform="translate(249.9 414)"><path d="M-1.8 -2.2L1.8 0L-1.8 2.2z" fill="#a8a8a8"/><path d="M2.6 -1.4V1.4" stroke="#a8a8a8" stroke-width="0.5"/></g>
<g transform="translate(259.4 414)"><path d="M-0.2 -2L2.8 0L-0.2 2zM-3 -2L0 0L-3 2z" fill="#a8a8a8"/><circle cx="3.2" r="0.6" fill="#a8a8a8"/></g>
<g transform="translate(268.6 414)"><path d="M2.2 -2.2V2.2" stroke="#a8a8a8" stroke-width="0.8"/><path d="M-2.4 -2.2L1.2 0L-2.4 2.2z" fill="#a8a8a8"/></g>
<rect x="276.8" y="409.8" width="18.6" height="8.8" rx="0.8" fill="#474ba2"/>
<g transform="translate(281.6 414)"><path d="M-2.6 -1V-2.4H2.6V-1M2.6 1V2.4H-2.6V1" fill="none" stroke="#c8ccff" stroke-width="0.7"/><path d="M-1 -0.4H1M-1 0.6H1" stroke="#c8ccff" stroke-width="0.5"/></g>
<g transform="translate(290.6 414)"><path d="M-2.8 2.4V-2.4H2.8V0.4" fill="none" stroke="#c8ccff" stroke-width="0.7"/><path d="M-0.6 1.6H3.2M2 0.4L3.4 1.6L2 2.8" fill="none" stroke="#c8ccff" stroke-width="0.6"/></g>
<g transform="translate(299.8 414)"><path d="M-2.6 -1H-1.2L0.8 -2.6V2.6L-1.2 1H-2.6z" fill="#dcdcdc"/><path d="M1.8 -1.4A2 2 0 0 1 1.8 1.4" fill="none" stroke="#dcdcdc" stroke-width="0.6"/></g>
<rect x="308.5" y="410.9" width="29.2" height="6.4" rx="0.8" fill="#1c1c1c"/>
<path d="M310.8 413.1L309.8 414L310.8 414.9" fill="none" stroke="#777" stroke-width="0.5"/><path d="M335.4 413.1L336.4 414L335.4 414.9" fill="none" stroke="#777" stroke-width="0.5"/>
<circle cx="345.9" cy="414" r="3" fill="#e0454e"/><circle cx="345.9" cy="414" r="1.3" fill="#8c2026"/><circle cx="349.6" cy="416.6" r="0.6" fill="#e0454e"/>
<circle cx="355.1" cy="414" r="3" fill="#e0454e"/><path d="M353.6 415.5L355.1 412.3L356.6 415.5M354.2 414.5H356" stroke="#fff" stroke-width="0.6" fill="none"/>
<circle cx="364.6" cy="414" r="2.4" fill="none" stroke="#e8e8e8" stroke-width="1.3"/>
<circle cx="376.6" cy="414" r="3" fill="#e4e4e4"/><path d="M375.7 415.6V412.4H377A0.9 0.9 0 0 1 377 414H375.7" stroke="#333" stroke-width="0.6" fill="none"/>
<circle cx="386.5" cy="414" r="2.7" fill="none" stroke="#8a8a8a" stroke-width="0.7"/><path d="M385.2 412.8L387.8 415.2M385.2 415.2L387.8 412.8" stroke="#8a8a8a" stroke-width="0.5"/>
<path d="M395.8 414H401.8M398.8 411V417" stroke="#9a9a9a" stroke-width="0.7"/>
<path d="M410.9 414A2.5 2.5 0 1 1 408.4 411.5" fill="none" stroke="#9a9a9a" stroke-width="0.7"/><circle cx="408.4" cy="414" r="0.9" fill="#9a9a9a"/>
<rect x="415" y="411.5" width="5" height="5" fill="none" stroke="#9a9a9a" stroke-width="0.6"/><rect x="416.6" y="413.1" width="1.8" height="1.8" fill="#9a9a9a"/>
<path d="M424 412.8H429.6M424 415.2H429.6" stroke="#ececec" stroke-width="1.3"/>
<rect x="431.2" y="409.8" width="10.2" height="8.8" rx="0.8" fill="#474ba2"/>
<path d="M433.6 416.4L436.2 411.4L438.8 416.4M435 414.8H437.6" stroke="#c8ccff" stroke-width="0.7" fill="none"/>
<path d="M622.2 411.2V416.6H627.4M622.2 416.6L626.6 411.8" stroke="#d0d0d0" stroke-width="0.65" fill="none"/>
<rect x="24.95" y="425.2" width="0.7" height="3" fill="#e8e8e8"/>
<rect x="38.37" y="426.6" width="0.5" height="1.4" fill="#6a6a6a"/>
<rect x="51.7" y="426.6" width="0.5" height="1.4" fill="#6a6a6a"/>
<rect x="65.02" y="426.6" width="0.5" height="1.4" fill="#6a6a6a"/>
<rect x="78.35" y="426.6" width="0.5" height="1.4" fill="#6a6a6a"/>
<rect x="91.67" y="426.6" width="0.5" height="1.4" fill="#6a6a6a"/>
<rect x="104.99" y="426.6" width="0.5" height="1.4" fill="#6a6a6a"/>
<rect x="118.32" y="426.6" width="0.5" height="1.4" fill="#6a6a6a"/>
<rect x="131.64" y="426.6" width="0.5" height="1.4" fill="#6a6a6a"/>
<rect x="144.97" y="426.6" width="0.5" height="1.4" fill="#6a6a6a"/>
<rect x="158.29" y="426.6" width="0.5" height="1.4" fill="#6a6a6a"/>
<rect x="171.61" y="426.6" width="0.5" height="1.4" fill="#6a6a6a"/>
<rect x="184.94" y="426.6" width="0.5" height="1.4" fill="#6a6a6a"/>
<rect x="198.26" y="426.6" width="0.5" height="1.4" fill="#6a6a6a"/>
<rect x="211.59" y="426.6" width="0.5" height="1.4" fill="#6a6a6a"/>
<rect x="224.81" y="425.2" width="0.7" height="3" fill="#e8e8e8"/>
<rect x="238.23" y="426.6" width="0.5" height="1.4" fill="#6a6a6a"/>
<rect x="251.56" y="426.6" width="0.5" height="1.4" fill="#6a6a6a"/>
<rect x="264.88" y="426.6" width="0.5" height="1.4" fill="#6a6a6a"/>
<rect x="278.21" y="426.6" width="0.5" height="1.4" fill="#6a6a6a"/>
<rect x="291.53" y="426.6" width="0.5" height="1.4" fill="#6a6a6a"/>
<rect x="304.85" y="426.6" width="0.5" height="1.4" fill="#6a6a6a"/>
<rect x="318.18" y="426.6" width="0.5" height="1.4" fill="#6a6a6a"/>
<rect x="331.5" y="426.6" width="0.5" height="1.4" fill="#6a6a6a"/>
<rect x="344.83" y="426.6" width="0.5" height="1.4" fill="#6a6a6a"/>
<rect x="358.15" y="426.6" width="0.5" height="1.4" fill="#6a6a6a"/>
<rect x="371.47" y="426.6" width="0.5" height="1.4" fill="#6a6a6a"/>
<rect x="384.8" y="426.6" width="0.5" height="1.4" fill="#6a6a6a"/>
<rect x="398.12" y="426.6" width="0.5" height="1.4" fill="#6a6a6a"/>
<rect x="411.45" y="426.6" width="0.5" height="1.4" fill="#6a6a6a"/>
<rect x="424.67" y="425.2" width="0.7" height="3" fill="#e8e8e8"/>
<rect x="438.09" y="426.6" width="0.5" height="1.4" fill="#6a6a6a"/>
<rect x="451.42" y="426.6" width="0.5" height="1.4" fill="#6a6a6a"/>
<rect x="464.74" y="426.6" width="0.5" height="1.4" fill="#6a6a6a"/>
<rect x="478.07" y="426.6" width="0.5" height="1.4" fill="#6a6a6a"/>
<rect x="491.39" y="426.6" width="0.5" height="1.4" fill="#6a6a6a"/>
<rect x="504.71" y="426.6" width="0.5" height="1.4" fill="#6a6a6a"/>
<rect x="518.04" y="426.6" width="0.5" height="1.4" fill="#6a6a6a"/>
<rect x="531.36" y="426.6" width="0.5" height="1.4" fill="#6a6a6a"/>
<rect x="544.69" y="426.6" width="0.5" height="1.4" fill="#6a6a6a"/>
<rect x="558.01" y="426.6" width="0.5" height="1.4" fill="#6a6a6a"/>
<rect x="571.33" y="426.6" width="0.5" height="1.4" fill="#6a6a6a"/>
<rect x="584.66" y="426.6" width="0.5" height="1.4" fill="#6a6a6a"/>
<rect x="597.98" y="426.6" width="0.5" height="1.4" fill="#6a6a6a"/>
<rect x="611.31" y="426.6" width="0.5" height="1.4" fill="#6a6a6a"/>
<rect x="624.53" y="425.2" width="0.7" height="3" fill="#e8e8e8"/>
<rect x="23.7" y="420.2" width="3.6" height="6.6" rx="0.7" fill="#5559c8"/>
<rect x="21.2" y="429.5" width="28.8" height="5" rx="0.8" fill="#1c1c1c"/>
<path d="M23.4 431.1L22.4 432L23.4 432.9" fill="none" stroke="#777" stroke-width="0.5"/><path d="M47.8 431.1L48.8 432L47.8 432.9" fill="none" stroke="#777" stroke-width="0.5"/>
<path d="M53.2 431.1L52.2 432L53.2 432.9" fill="none" stroke="#777" stroke-width="0.5"/>
<path d="M595.2 431.1L596.2 432L595.2 432.9" fill="none" stroke="#777" stroke-width="0.5"/>
<rect x="599.2" y="429.5" width="29.6" height="5" rx="0.8" fill="#1c1c1c"/>
<path d="M5 438.8H8.4M5 439.8H8.4M5 440.8H8.4" stroke="#9a9a9a" stroke-width="0.5"/>
</svg>
<svg width="613.0" height="371.5" viewBox="17.0 34.0 613.0 371.5" style="position:absolute;left:17.0px;top:34.0px;display:block">
<defs>
<linearGradient id="hz" x1="0" y1="0" x2="0" y2="1"><stop offset="0" stop-color="#b9c4c3"/><stop offset="0.3" stop-color="#bfcbca"/><stop offset="1" stop-color="#c3cfce"/></linearGradient>
<radialGradient id="sg" cx="0.72" cy="0.44" r="0.85" fx="0.74" fy="0.42"><stop offset="0" stop-color="#b4b4b4"/><stop offset="0.3" stop-color="#a6a6a6"/><stop offset="0.6" stop-color="#939393"/><stop offset="0.85" stop-color="#7b7b7b"/><stop offset="1" stop-color="#686868"/></radialGradient>
<linearGradient id="sd" x1="0.35" y1="0" x2="0.5" y2="1"><stop offset="0" stop-color="#000" stop-opacity="0.08"/><stop offset="0.45" stop-color="#000" stop-opacity="0"/><stop offset="0.7" stop-color="#000" stop-opacity="0.16"/><stop offset="1" stop-color="#000" stop-opacity="0.6"/></linearGradient>
<clipPath id="fc"><path d="M10 113L20 112.5L30 112.1L40 111.7L50 111.4L60 111L70 110.6L80 110.3L90 110L100 109.7L110 109.4L120 109.1L130 108.8L140 108.6L150 108.3L160 108.1L170 107.9L180 107.7L190 107.5L200 107.3L210 107.2L220 107L230 106.9L240 106.8L250 106.7L260 106.6L270 106.5L280 106.5L290 106.4L300 106.4L310 106.4L320 106.4L330 106.4L340 106.4L350 106.5L360 106.5L370 106.6L380 106.7L390 106.8L400 106.9L410 107L420 107.2L430 107.3L440 107.5L450 107.7L460 107.9L470 108.1L480 108.3L490 108.6L500 108.8L510 109.1L520 109.4L530 109.7L540 110L550 110.3L560 110.6L570 111L580 111.4L590 111.7L600 112.1L610 112.5L620 113L630 113.4L640 113.9L640 420L10 420z"/></clipPath>
<g id="i0" stroke="#333" stroke-width=".3" stroke-opacity=".55" stroke-linejoin="round"><path d="M-6.1 0.8L-2.1 5.4L-2.2 4z" fill="#666666"/><path d="M3.5 5L-2.2 4L-2.1 5.4z" fill="#666666"/><path d="M-3.5 -5L-6.1 0.8L-3.1 -2.5z" fill="#a8a8a8"/><path d="M-3.1 -2.5L2.1 -5.4L-3.5 -5z" fill="#fafafa"/><path d="M2.9 0.1L3.5 5L6.1 -0.8z" fill="#7e7e7e"/><path d="M2.9 0.1L6.1 -0.8L2.1 -5.4z" fill="#e4e4e4"/><path d="M-2.2 4L-3.1 -2.5L-6.1 0.8z" fill="#787878"/><path d="M2.9 0.1L-2.2 4L3.5 5z" fill="#666666"/><path d="M2.9 0.1L2.1 -5.4L-3.1 -2.5z" fill="#fafafa"/><path d="M2.9 0.1L-3.1 -2.5L-2.2 4z" fill="#b4b4b4"/></g>
<g id="i1" stroke="#333" stroke-width=".3" stroke-opacity=".55" stroke-linejoin="round"><path d="M-3.7 4.2L2.1 5.8L-2.8 4z" fill="#666666"/><path d="M-3.7 4.2L-2.8 4L-6.1 -0.7z" fill="#666666"/><path d="M6.1 0.7L3.2 1.9L2.1 5.8z" fill="#666666"/><path d="M-1.8 -2.2L-2.1 -5.8L-6.1 -0.7z" fill="#d2d2d2"/><path d="M3.7 -4.2L3.2 1.9L6.1 0.7z" fill="#bababa"/><path d="M3.7 -4.2L-2.1 -5.8L-1.8 -2.2z" fill="#fafafa"/><path d="M-2.8 4L2.1 5.8L3.2 1.9z" fill="#666666"/><path d="M-6.1 -0.7L-2.8 4L-1.8 -2.2z" fill="#909090"/><path d="M3.7 -4.2L-1.8 -2.2L3.2 1.9z" fill="#f6f6f6"/><path d="M3.2 1.9L-1.8 -2.2L-2.8 4z" fill="#a2a2a2"/></g>
<g id="i2" stroke="#333" stroke-width=".3" stroke-opacity=".55" stroke-linejoin="round"><path d="M2.8 -5.1L5.9 0.6L4.4 -2.5z" fill="#c0c0c0"/><path d="M1.4 5.3L3.6 4L5.9 0.6z" fill="#666666"/><path d="M2.8 -5.1L-1.4 -5.3L-3.6 -4z" fill="#fafafa"/><path d="M-2.8 5.1L1.4 5.3L-4.4 2.5z" fill="#666666"/><path d="M-5.9 -0.6L-4.4 2.5L-3.6 -4z" fill="#848484"/><path d="M2.8 -5.1L1 -0.4L5.9 0.6z" fill="#eaeaea"/><path d="M5.9 0.6L1 -0.4L1.4 5.3z" fill="#8a8a8a"/><path d="M2.8 -5.1L-3.6 -4L1 -0.4z" fill="#fafafa"/><path d="M-4.4 2.5L1.4 5.3L1 -0.4z" fill="#727272"/><path d="M1 -0.4L-3.6 -4L-4.4 2.5z" fill="#c0c0c0"/></g>
<g id="i3" stroke="#333" stroke-width=".3" stroke-opacity=".55" stroke-linejoin="round"><path d="M-5.4 2.4L-2.2 4.7L0.2 5.6z" fill="#666666"/><path d="M-0.2 -5.6L-4.2 -4L2.2 -4.7z" fill="#fafafa"/><path d="M4.9 1.2L0.2 5.6L4.2 4z" fill="#666666"/><path d="M4.9 1.2L5.4 -2.4L2.2 -4.7z" fill="#d8d8d8"/><path d="M-4.2 -4L-5.4 2.4L-1.1 0.2z" fill="#a2a2a2"/><path d="M0.2 5.6L-1.1 0.2L-5.4 2.4z" fill="#666666"/><path d="M-1.1 0.2L2.2 -4.7L-4.2 -4z" fill="#fafafa"/><path d="M4.9 1.2L-1.1 0.2L0.2 5.6z" fill="#7e7e7e"/><path d="M4.9 1.2L2.2 -4.7L-1.1 0.2z" fill="#eaeaea"/></g>
<g id="i4" stroke="#333" stroke-width=".3" stroke-opacity=".55" stroke-linejoin="round"><path d="M-0.6 6.2L-3.6 2.1L-5.5 2.3z" fill="#666666"/><path d="M-0.6 6.2L5 3.4L2.9 2.8z" fill="#666666"/><path d="M-5.5 2.3L-3.6 2.1L-5 -3.4z" fill="#666666"/><path d="M2.9 2.8L5 3.4L5.5 -2.3z" fill="#7e7e7e"/><path d="M0.6 -6.2L-5 -3.4L0.2 -3.1z" fill="#fafafa"/><path d="M0.6 -6.2L0.2 -3.1L5.5 -2.3z" fill="#fafafa"/><path d="M-0.6 6.2L2.9 2.8L-3.6 2.1z" fill="#666666"/><path d="M0.2 -3.1L-5 -3.4L-3.6 2.1z" fill="#cccccc"/><path d="M5.5 -2.3L0.2 -3.1L2.9 2.8z" fill="#dedede"/><path d="M-3.6 2.1L2.9 2.8L0.2 -3.1z" fill="#bababa"/></g>
<g id="i5" stroke="#333" stroke-width=".3" stroke-opacity=".55" stroke-linejoin="round"><path d="M4.6 1.5L5.1 2.4L5 -3.7z" fill="#848484"/><path d="M1 6L5.1 2.4L4.6 1.5z" fill="#666666"/><path d="M-1 -6L0.9 -3.7L5 -3.7z" fill="#fafafa"/><path d="M-1 -6L-5.1 -2.4L0.9 -3.7z" fill="#fafafa"/><path d="M1 6L-1.6 2.3L-5 3.7z" fill="#666666"/><path d="M-5 3.7L-1.6 2.3L-5.1 -2.4z" fill="#666666"/><path d="M5 -3.7L0.9 -3.7L4.6 1.5z" fill="#eaeaea"/><path d="M1 6L4.6 1.5L-1.6 2.3z" fill="#666666"/><path d="M0.9 -3.7L-5.1 -2.4L-1.6 2.3z" fill="#d8d8d8"/><path d="M-1.6 2.3L4.6 1.5L0.9 -3.7z" fill="#cccccc"/></g>
<g id="i6" stroke="#333" stroke-width=".3" stroke-opacity=".55" stroke-linejoin="round"><path d="M5.3 -2.6L-0.2 -6.1L2.8 -3.8z" fill="#f0f0f0"/><path d="M-5.3 2.6L-3.7 -3.5L-5.2 -2.1z" fill="#7e7e7e"/><path d="M5.3 -2.6L2.8 -3.8L5.2 2.1z" fill="#c6c6c6"/><path d="M2.8 -3.8L-0.2 -6.1L-3.7 -3.5z" fill="#fafafa"/><path d="M-5.3 2.6L0.2 6.1L-0.3 1.6z" fill="#666666"/><path d="M-0.3 1.6L0.2 6.1L5.2 2.1z" fill="#666666"/><path d="M-5.3 2.6L-0.3 1.6L-3.7 -3.5z" fill="#9c9c9c"/><path d="M5.2 2.1L2.8 -3.8L-0.3 1.6z" fill="#cccccc"/><path d="M-3.7 -3.5L-0.3 1.6L2.8 -3.8z" fill="#f6f6f6"/></g>
<g id="i7" stroke="#333" stroke-width=".3" stroke-opacity=".55" stroke-linejoin="round"><path d="M5.6 2.1L3.7 2.3L0.8 6.2z" fill="#666666"/><path d="M-2.8 3.2L-4.9 3.4L0.8 6.2z" fill="#666666"/><path d="M5.6 2.1L4.9 -3.4L3.7 2.3z" fill="#909090"/><path d="M-5.6 -2.1L-4.9 3.4L-2.8 3.2z" fill="#666666"/><path d="M-0.8 -6.2L-0.3 -2.8L4.9 -3.4z" fill="#fafafa"/><path d="M-5.6 -2.1L-0.3 -2.8L-0.8 -6.2z" fill="#f6f6f6"/><path d="M0.8 6.2L3.7 2.3L-2.8 3.2z" fill="#666666"/><path d="M3.7 2.3L4.9 -3.4L-0.3 -2.8z" fill="#eaeaea"/><path d="M-5.6 -2.1L-2.8 3.2L-0.3 -2.8z" fill="#bababa"/><path d="M-0.3 -2.8L-2.8 3.2L3.7 2.3z" fill="#aeaeae"/></g>
<g id="i8" stroke="#333" stroke-width=".3" stroke-opacity=".55" stroke-linejoin="round"><path d="M5 -2.7L0.3 -6.2L4.2 -2.5z" fill="#eaeaea"/><path d="M5 -2.7L4.2 -2.5L5.4 3z" fill="#a2a2a2"/><path d="M-5.4 -3L-2.2 -2.7L0.3 -6.2z" fill="#eaeaea"/><path d="M0.9 3L-0.3 6.2L5.4 3z" fill="#666666"/><path d="M-5 2.7L-2.2 -2.7L-5.4 -3z" fill="#9c9c9c"/><path d="M-5 2.7L-0.3 6.2L0.9 3z" fill="#666666"/><path d="M4.2 -2.5L0.3 -6.2L-2.2 -2.7z" fill="#fafafa"/><path d="M5.4 3L4.2 -2.5L0.9 3z" fill="#9c9c9c"/><path d="M-5 2.7L0.9 3L-2.2 -2.7z" fill="#969696"/><path d="M-2.2 -2.7L0.9 3L4.2 -2.5z" fill="#e4e4e4"/></g>
<g id="i9" stroke="#333" stroke-width=".3" stroke-opacity=".55" stroke-linejoin="round"><path d="M-6.1 -0.2L-2.1 -5L-3.4 -4z" fill="#aeaeae"/><path d="M6.1 0.2L2.7 -5.4L3.8 -2.4z" fill="#cccccc"/><path d="M2.1 5L3.4 4L-2.7 5.4z" fill="#666666"/><path d="M3.8 -2.4L2.7 -5.4L-2.1 -5z" fill="#fafafa"/><path d="M6.1 0.2L3.8 -2.4L3.4 4z" fill="#969696"/><path d="M-6.1 -0.2L-2.7 5.4L-1.7 0.8z" fill="#666666"/><path d="M-6.1 -0.2L-1.7 0.8L-2.1 -5z" fill="#c0c0c0"/><path d="M-1.7 0.8L-2.7 5.4L3.4 4z" fill="#666666"/><path d="M-2.1 -5L-1.7 0.8L3.8 -2.4z" fill="#fafafa"/><path d="M3.4 4L3.8 -2.4L-1.7 0.8z" fill="#b4b4b4"/></g>
<g id="i10" stroke="#333" stroke-width=".3" stroke-opacity=".55" stroke-linejoin="round"><path d="M-4.8 -3.9L-5.1 2.4L-4.9 0.8z" fill="#666666"/><path d="M1.4 -5.8L-4.8 -3.9L-0.8 -4.3z" fill="#f0f0f0"/><path d="M-1.4 5.8L-4.9 0.8L-5.1 2.4z" fill="#666666"/><path d="M-0.8 -4.3L5.1 -2.4L1.4 -5.8z" fill="#fafafa"/><path d="M-4.9 0.8L-0.8 -4.3L-4.8 -3.9z" fill="#cccccc"/><path d="M1.3 1.7L-1.4 5.8L4.8 3.9z" fill="#666666"/><path d="M1.3 1.7L4.8 3.9L5.1 -2.4z" fill="#9c9c9c"/><path d="M1.3 1.7L-4.9 0.8L-1.4 5.8z" fill="#666666"/><path d="M1.3 1.7L5.1 -2.4L-0.8 -4.3z" fill="#f6f6f6"/><path d="M1.3 1.7L-0.8 -4.3L-4.9 0.8z" fill="#cccccc"/></g>
<g id="i11" stroke="#333" stroke-width=".3" stroke-opacity=".55" stroke-linejoin="round"><path d="M-3.6 -2.8L-0.3 -6.2L-5.3 -2.5z" fill="#cccccc"/><path d="M2.9 -3.1L5.3 -2.9L-0.3 -6.2z" fill="#fafafa"/><path d="M-5.3 -2.5L-5.3 2.9L-3.6 -2.8z" fill="#787878"/><path d="M2.9 -3.1L5.3 2.5L5.3 -2.9z" fill="#c0c0c0"/><path d="M-5.3 2.9L0.3 6.2L-0.2 2.6z" fill="#666666"/><path d="M5.3 2.5L-0.2 2.6L0.3 6.2z" fill="#666666"/><path d="M2.9 -3.1L-0.3 -6.2L-3.6 -2.8z" fill="#fafafa"/><path d="M-0.2 2.6L-3.6 -2.8L-5.3 2.9z" fill="#8a8a8a"/><path d="M2.9 -3.1L-0.2 2.6L5.3 2.5z" fill="#b4b4b4"/><path d="M2.9 -3.1L-3.6 -2.8L-0.2 2.6z" fill="#e4e4e4"/></g>
<g id="i12" stroke="#333" stroke-width=".3" stroke-opacity=".55" stroke-linejoin="round"><path d="M-5.3 3.1L-4.1 -1.9L-5 -2.9z" fill="#6c6c6c"/><path d="M-0.3 -6.1L-5 -2.9L-4.1 -1.9z" fill="#d2d2d2"/><path d="M-0.8 3.7L-5.3 3.1L0.3 6.1z" fill="#666666"/><path d="M-0.8 3.7L0.3 6.1L5 2.9z" fill="#666666"/><path d="M5.3 -3.1L-0.3 -6.1L2.3 -2.1z" fill="#fafafa"/><path d="M2.3 -2.1L5 2.9L5.3 -3.1z" fill="#c0c0c0"/><path d="M-0.8 3.7L-4.1 -1.9L-5.3 3.1z" fill="#666666"/><path d="M-4.1 -1.9L2.3 -2.1L-0.3 -6.1z" fill="#fafafa"/><path d="M-0.8 3.7L5 2.9L2.3 -2.1z" fill="#9c9c9c"/><path d="M-0.8 3.7L2.3 -2.1L-4.1 -1.9z" fill="#c6c6c6"/></g>
<g id="i13" stroke="#333" stroke-width=".3" stroke-opacity=".55" stroke-linejoin="round"><path d="M-2.7 -5.1L-6.2 0L-2.9 -3.7z" fill="#aeaeae"/><path d="M-2.9 -3.7L2.7 -5.4L-2.7 -5.1z" fill="#fafafa"/><path d="M-6.2 0L-2.7 5.4L-3 2.7z" fill="#666666"/><path d="M2.7 5.1L-3 2.7L-2.7 5.4z" fill="#666666"/><path d="M2.6 -0.6L6.2 0L2.7 -5.4z" fill="#e4e4e4"/><path d="M2.6 -0.6L2.7 5.1L6.2 0z" fill="#8a8a8a"/><path d="M-3 2.7L-2.9 -3.7L-6.2 0z" fill="#969696"/><path d="M2.6 -0.6L2.7 -5.4L-2.9 -3.7z" fill="#fafafa"/><path d="M2.6 -0.6L-3 2.7L2.7 5.1z" fill="#7e7e7e"/><path d="M2.6 -0.6L-2.9 -3.7L-3 2.7z" fill="#d2d2d2"/></g>
<g id="i14" stroke="#333" stroke-width=".3" stroke-opacity=".55" stroke-linejoin="round"><path d="M-0.1 4.1L-0.2 6L5.2 3.3z" fill="#666666"/><path d="M-5.4 3L-0.2 6L-0.1 4.1z" fill="#666666"/><path d="M5.4 -3L3.3 -1.4L5.2 3.3z" fill="#a8a8a8"/><path d="M-5.4 3L-3.2 -1.6L-5.2 -3.3z" fill="#848484"/><path d="M5.4 -3L0.2 -6L3.3 -1.4z" fill="#fafafa"/><path d="M-5.2 -3.3L-3.2 -1.6L0.2 -6z" fill="#e4e4e4"/><path d="M5.2 3.3L3.3 -1.4L-0.1 4.1z" fill="#848484"/><path d="M-5.4 3L-0.1 4.1L-3.2 -1.6z" fill="#6c6c6c"/><path d="M3.3 -1.4L0.2 -6L-3.2 -1.6z" fill="#fafafa"/><path d="M-3.2 -1.6L-0.1 4.1L3.3 -1.4z" fill="#c0c0c0"/></g>
<g id="i15" stroke="#333" stroke-width=".3" stroke-opacity=".55" stroke-linejoin="round"><path d="M-2.1 5.8L4 4.2L2.3 3.9z" fill="#666666"/><path d="M-2.1 5.8L-3.9 1.8L-5.9 0.8z" fill="#666666"/><path d="M2.3 3.9L4 4.2L5.9 -0.8z" fill="#666666"/><path d="M-5.9 0.8L-3.9 1.8L-4 -4.2z" fill="#7e7e7e"/><path d="M2.1 -5.8L1 -2.3L5.9 -0.8z" fill="#fafafa"/><path d="M2.1 -5.8L-4 -4.2L1 -2.3z" fill="#fafafa"/><path d="M-2.1 5.8L2.3 3.9L-3.9 1.8z" fill="#666666"/><path d="M5.9 -0.8L1 -2.3L2.3 3.9z" fill="#bababa"/><path d="M1 -2.3L-4 -4.2L-3.9 1.8z" fill="#d8d8d8"/><path d="M-3.9 1.8L2.3 3.9L1 -2.3z" fill="#a8a8a8"/></g>
<g id="i16" stroke="#333" stroke-width=".3" stroke-opacity=".55" stroke-linejoin="round"><path d="M1.1 -4.8L5.5 -2.8L0 -5.6z" fill="#f0f0f0"/><path d="M5.5 -2.8L4.1 1L4.8 3.7z" fill="#7e7e7e"/><path d="M1.1 -4.8L0 -5.6L-4.8 -3.7z" fill="#f6f6f6"/><path d="M0 5.6L4.8 3.7L4.1 1z" fill="#666666"/><path d="M1.1 -4.8L4.1 1L5.5 -2.8z" fill="#eaeaea"/><path d="M-2.2 0.4L-4.8 -3.7L-5.5 2.8z" fill="#8a8a8a"/><path d="M-5.5 2.8L0 5.6L-2.2 0.4z" fill="#666666"/><path d="M1.1 -4.8L-4.8 -3.7L-2.2 0.4z" fill="#f0f0f0"/><path d="M4.1 1L-2.2 0.4L0 5.6z" fill="#7e7e7e"/><path d="M1.1 -4.8L-2.2 0.4L4.1 1z" fill="#eaeaea"/></g>
<g id="i17" stroke="#333" stroke-width=".3" stroke-opacity=".55" stroke-linejoin="round"><path d="M0.2 5.5L1 5L-4.8 3.8z" fill="#666666"/><path d="M5.6 2.7L4.8 -3.8L3.8 -0.7z" fill="#a8a8a8"/><path d="M3.8 -0.7L4.8 -3.8L-0.2 -5.5z" fill="#fafafa"/><path d="M-5.6 -2.7L-4.8 3.8L-2.6 0z" fill="#727272"/><path d="M5.6 2.7L3.8 -0.7L1 5z" fill="#6c6c6c"/><path d="M-5.6 -2.7L-2.6 0L-0.2 -5.5z" fill="#e4e4e4"/><path d="M-2.6 0L-4.8 3.8L1 5z" fill="#666666"/><path d="M-0.2 -5.5L-2.6 0L3.8 -0.7z" fill="#fafafa"/><path d="M1 5L3.8 -0.7L-2.6 0z" fill="#a2a2a2"/></g>
<g id="i18" stroke="#333" stroke-width=".3" stroke-opacity=".55" stroke-linejoin="round"><path d="M-0.5 -6.2L-5.1 -2.3L-4.3 -2.5z" fill="#c0c0c0"/><path d="M-5.3 3.2L-4.3 -2.5L-5.1 -2.3z" fill="#666666"/><path d="M5.3 -3.2L-0.5 -6.2L2.1 -3z" fill="#fafafa"/><path d="M-0.8 2.8L-5.3 3.2L0.5 6.2z" fill="#666666"/><path d="M2.1 -3L5.1 2.3L5.3 -3.2z" fill="#d2d2d2"/><path d="M-0.8 2.8L0.5 6.2L5.1 2.3z" fill="#666666"/><path d="M-4.3 -2.5L2.1 -3L-0.5 -6.2z" fill="#fafafa"/><path d="M-0.8 2.8L-4.3 -2.5L-5.3 3.2z" fill="#787878"/><path d="M-0.8 2.8L5.1 2.3L2.1 -3z" fill="#b4b4b4"/><path d="M-0.8 2.8L2.1 -3L-4.3 -2.5z" fill="#dedede"/></g>
<g id="i19" stroke="#333" stroke-width=".3" stroke-opacity=".55" stroke-linejoin="round"><path d="M-5.8 2.2L-4.1 -1.9L-4.3 -4z" fill="#787878"/><path d="M-5.8 2.2L-0.5 5.9L-1.8 4.1z" fill="#666666"/><path d="M-4.3 -4L-4.1 -1.9L0.5 -5.9z" fill="#e4e4e4"/><path d="M-1.8 4.1L-0.5 5.9L4.3 4z" fill="#666666"/><path d="M-5.8 2.2L-1.8 4.1L-4.1 -1.9z" fill="#666666"/><path d="M5.8 -2.2L0.5 -5.9L2.1 -0.9z" fill="#fafafa"/><path d="M5.8 -2.2L2.1 -0.9L4.3 4z" fill="#aeaeae"/><path d="M2.1 -0.9L0.5 -5.9L-4.1 -1.9z" fill="#fafafa"/><path d="M4.3 4L2.1 -0.9L-1.8 4.1z" fill="#787878"/><path d="M-4.1 -1.9L-1.8 4.1L2.1 -0.9z" fill="#b4b4b4"/></g>
<g id="i20" stroke="#333" stroke-width=".3" stroke-opacity=".55" stroke-linejoin="round"><path d="M-5.9 -1.8L-1.8 -4.6L-1.1 -5.5z" fill="#cccccc"/><path d="M4.2 -4.5L-1.1 -5.5L-1.8 -4.6z" fill="#fafafa"/><path d="M-3.7 1.5L-5.9 -1.8L-4.2 4.5z" fill="#666666"/><path d="M-3.7 1.5L-4.2 4.5L1.1 5.5z" fill="#666666"/><path d="M5.9 1.8L4.2 -4.5L2.6 -0.1z" fill="#c6c6c6"/><path d="M-3.7 1.5L-1.8 -4.6L-5.9 -1.8z" fill="#b4b4b4"/><path d="M2.6 -0.1L1.1 5.5L5.9 1.8z" fill="#6c6c6c"/><path d="M-1.8 -4.6L2.6 -0.1L4.2 -4.5z" fill="#fafafa"/><path d="M-3.7 1.5L1.1 5.5L2.6 -0.1z" fill="#7e7e7e"/><path d="M-3.7 1.5L2.6 -0.1L-1.8 -4.6z" fill="#dedede"/></g>
<g id="i21" stroke="#333" stroke-width=".3" stroke-opacity=".55" stroke-linejoin="round"><path d="M-6 -1.7L-1.3 -4.5L-1.5 -5.5z" fill="#d2d2d2"/><path d="M-1.5 -5.5L-1.3 -4.5L4.2 -4.5z" fill="#fafafa"/><path d="M-6 -1.7L-4.2 4.5L-3 1.8z" fill="#666666"/><path d="M6 1.7L4.2 -4.5L3.3 0z" fill="#c0c0c0"/><path d="M-3 1.8L-4.2 4.5L1.5 5.5z" fill="#666666"/><path d="M6 1.7L3.3 0L1.5 5.5z" fill="#666666"/><path d="M-6 -1.7L-3 1.8L-1.3 -4.5z" fill="#c0c0c0"/><path d="M3.3 0L4.2 -4.5L-1.3 -4.5z" fill="#fafafa"/><path d="M1.5 5.5L3.3 0L-3 1.8z" fill="#787878"/><path d="M-1.3 -4.5L-3 1.8L3.3 0z" fill="#dedede"/></g>
<g id="i22" stroke="#333" stroke-width=".3" stroke-opacity=".55" stroke-linejoin="round"><path d="M-5.7 0.6L-2.7 -5.2L-4.7 -2.2z" fill="#969696"/><path d="M-2.7 -5.2L3.7 -4.2L1.1 -5.2z" fill="#fafafa"/><path d="M-1.1 5.2L-5.7 0.6L-3.7 4.2z" fill="#666666"/><path d="M3.7 -4.2L4.7 2.2L5.7 -0.6z" fill="#b4b4b4"/><path d="M4.7 2.2L-1.1 5.2L2.7 5.2z" fill="#666666"/><path d="M-0.5 -0.6L-2.7 -5.2L-5.7 0.6z" fill="#cccccc"/><path d="M-0.5 -0.6L3.7 -4.2L-2.7 -5.2z" fill="#fafafa"/><path d="M-0.5 -0.6L-5.7 0.6L-1.1 5.2z" fill="#787878"/><path d="M-0.5 -0.6L4.7 2.2L3.7 -4.2z" fill="#dedede"/><path d="M-0.5 -0.6L-1.1 5.2L4.7 2.2z" fill="#848484"/></g>
<g id="i23" stroke="#333" stroke-width=".3" stroke-opacity=".55" stroke-linejoin="round"><path d="M-6.1 -0.3L-2.8 5.1L-3.5 3.3z" fill="#666666"/><path d="M-2.3 -5.5L-6.1 -0.3L-3.2 -3.2z" fill="#b4b4b4"/><path d="M2.3 5.5L-3.5 3.3L-2.8 5.1z" fill="#666666"/><path d="M-3.2 -3.2L2.8 -5.1L-2.3 -5.5z" fill="#fafafa"/><path d="M-3.5 3.3L-3.2 -3.2L-6.1 -0.3z" fill="#848484"/><path d="M2.1 0.4L2.3 5.5L6.1 0.3z" fill="#787878"/><path d="M2.1 0.4L6.1 0.3L2.8 -5.1z" fill="#dedede"/><path d="M2.1 0.4L-3.5 3.3L2.3 5.5z" fill="#666666"/><path d="M2.1 0.4L2.8 -5.1L-3.2 -3.2z" fill="#fafafa"/><path d="M2.1 0.4L-3.2 -3.2L-3.5 3.3z" fill="#bababa"/></g>
</defs>
<rect x="17" y="34" width="613" height="372" fill="#c5d1d0"/>
<path d="M10 113L20 112.5L30 112.1L40 111.7L50 111.4L60 111L70 110.6L80 110.3L90 110L100 109.7L110 109.4L120 109.1L130 108.8L140 108.6L150 108.3L160 108.1L170 107.9L180 107.7L190 107.5L200 107.3L210 107.2L220 107L230 106.9L240 106.8L250 106.7L260 106.6L270 106.5L280 106.5L290 106.4L300 106.4L310 106.4L320 106.4L330 106.4L340 106.4L350 106.5L360 106.5L370 106.6L380 106.7L390 106.8L400 106.9L410 107L420 107.2L430 107.3L440 107.5L450 107.7L460 107.9L470 108.1L480 108.3L490 108.6L500 108.8L510 109.1L520 109.4L530 109.7L540 110L550 110.3L560 110.6L570 111L580 111.4L590 111.7L600 112.1L610 112.5L620 113L630 113.4L640 113.9L640 420L10 420z" fill="#c3cfce"/>
<path d="M10 113L20 112.5L30 112.1L40 111.7L50 111.4L60 111L70 110.6L80 110.3L90 110L100 109.7L110 109.4L120 109.1L130 108.8L140 108.6L150 108.3L160 108.1L170 107.9L180 107.7L190 107.5L200 107.3L210 107.2L220 107L230 106.9L240 106.8L250 106.7L260 106.6L270 106.5L280 106.5L290 106.4L300 106.4L310 106.4L320 106.4L330 106.4L340 106.4L350 106.5L360 106.5L370 106.6L380 106.7L390 106.8L400 106.9L410 107L420 107.2L430 107.3L440 107.5L450 107.7L460 107.9L470 108.1L480 108.3L490 108.6L500 108.8L510 109.1L520 109.4L530 109.7L540 110L550 110.3L560 110.6L570 111L580 111.4L590 111.7L600 112.1L610 112.5L620 113L630 113.4L640 113.9L640 173.9L630 173.4L620 173L610 172.5L600 172.1L590 171.7L580 171.4L570 171L560 170.6L550 170.3L540 170L530 169.7L520 169.4L510 169.1L500 168.8L490 168.6L480 168.3L470 168.1L460 167.9L450 167.7L440 167.5L430 167.3L420 167.2L410 167L400 166.9L390 166.8L380 166.7L370 166.6L360 166.5L350 166.5L340 166.4L330 166.4L320 166.4L310 166.4L300 166.4L290 166.4L280 166.5L270 166.5L260 166.6L250 166.7L240 166.8L230 166.9L220 167L210 167.2L200 167.3L190 167.5L180 167.7L170 167.9L160 168.1L150 168.3L140 168.6L130 168.8L120 169.1L110 169.4L100 169.7L90 170L80 170.3L70 170.6L60 171L50 171.4L40 171.7L30 172.1L20 172.5L10 173z" fill="url(#hz)"/>
<g clip-path="url(#fc)" fill="none" stroke="#788584">
<path d="M85.6 192.1L-3 203.2M617 195.6L650 199.4M182.2 187.5L-3 212.6M489.9 188.5L650 208M255.8 185.5L-3 223.8M405.6 185.8L650 218.2M318.4 185L-3 237.2M337.3 185L650 230.2M375.2 185.3L-3 253.6M277.1 185.2L650 244.7M480.6 188.1L-3 300.2M167.5 188.1L650 285M532.4 190.5L-3 335.1M114.2 190.5L650 314.1M585.1 193.5L-3 383.8M60.3 193.6L650 353.5M639.7 197.3L73.9 425.5M4.6 197.5L650 409.4M650 227.1L279.6 425.5M-3 223.4L482.1 425.5M650 294.4L485.4 425.5M-3 272.7L265.3 425.5M-3 379.2L48.4 425.5M428.6 186.4L-3 274M221.3 186.3L650 262.5" stroke-opacity="0.22" stroke-width="0.8"/>
<path d="M18.8 158.1L-3 159.8M102.1 154.8L-3 163.4M558.6 155.3L650 162.1M164.1 152.9L-3 167.3M487.4 153L650 165.8M260.4 151.2L-3 176.4M383.3 151.1L650 174.5M301.2 150.9L-3 181.9M340.4 150.9L650 179.6M339.2 150.9L-3 188M300.8 150.9L650 185.3M375.2 151.1L-3 195.1M263.4 151.1L650 191.9M410 151.5L85.6 192.1M227.5 151.6L617 195.6M443.9 152L182.2 187.5M192.6 152.3L489.9 188.5M477.3 152.8L255.8 185.5M158.1 153.1L405.6 185.8M510.6 153.7L318.4 185M123.8 154.1L337.3 185M544.2 154.8L375.2 185.3M89.3 155.3L277.1 185.2M612.9 157.5L480.6 188.1M18.5 158.2L167.5 188.1M648.6 159.1L532.4 190.5M-3 163.5L114.2 190.5M650 172.5L585.1 193.5M-3 176.5L60.3 193.6M215.5 151.8L-3 171.6M431.3 151.8L650 169.9M578.2 156L428.6 186.4M54.3 156.6L221.3 186.3" stroke-opacity="0.22" stroke-width="0.65"/>
<path d="M44.2 136.1L-3 138.7M608.1 136.3L650 138.4M98.8 134.6L-3 140.4M545.7 134.6L650 140M182.1 133L-3 144.2M455.9 132.8L650 143.7M216.6 132.5L-3 146.3M419.7 132.4L650 145.7M248.1 132.2L-3 148.6M386.9 132.1L650 147.9M277.4 132L-3 151M356.6 131.9L650 150.3M305 131.9L-3 153.7M328 131.8L650 152.9M331.4 131.8L-3 156.6M300.9 131.9L650 155.7M356.8 131.9L18.8 158.1M274.8 132L650 158.8M381.4 132L102.1 154.8M249.6 132.2L558.6 155.3M405.4 132.2L164.1 152.9M224.9 132.4L487.4 153M452.3 132.8L260.4 151.2M176.7 133.1L383.3 151.1M475.5 133.1L301.2 150.9M152.9 133.5L340.4 150.9M498.5 133.6L339.2 150.9M129.1 134L300.8 150.9M521.7 134L375.2 151.1M105.3 134.5L263.4 151.1M544.9 134.6L410 151.5M81.3 135.1L227.5 151.6M568.4 135.1L443.9 152M57 135.7L192.6 152.3M592.2 135.8L477.3 152.8M32.4 136.4L158.1 153.1M616.4 136.5L510.6 153.7M7.3 137.2L123.8 154.1M641.1 137.3L544.2 154.8M-3 140.5L89.3 155.3M650 148.9L612.9 157.5M-3 153.8L18.5 158.2M143.5 133.7L-3 142.2M497 133.5L650 141.8M429 132.5L215.5 151.8M200.7 132.7L431.3 151.8M650 141.4L578.2 156M-3 146.4L54.3 156.6" stroke-opacity="0.2" stroke-width="0.5"/>
<path d="M43 122L-3 123.7M595.2 121.8L650 123.7M82.5 121.2L-3 124.5M552.4 121L650 124.5M116.4 120.6L-3 125.4M516.6 120.4L650 125.4M146.4 120.2L-3 126.3M485.2 120L650 126.3M173.5 119.9L-3 127.2M457.1 119.7L650 127.2M221.9 119.4L-3 129.3M407.4 119.3L650 129.2M243.8 119.2L-3 130.4M385 119.1L650 130.3M264.7 119.1L-3 131.6M363.6 119L650 131.5M284.7 119L-3 132.8M343.3 119L650 132.7M303.9 119L-3 134.2M323.7 119L650 134M322.4 119L-3 135.6M304.7 119L650 135.4M340.5 119L-3 137.1M286.3 119L650 136.8M358.1 119L44.2 136.1M268.3 119.1L608.1 136.3M375.3 119.1L98.8 134.6M250.7 119.2L545.7 134.6M408.9 119.3L182.1 133M216.3 119.4L455.9 132.8M425.4 119.4L216.6 132.5M199.4 119.6L419.7 132.4M441.8 119.5L248.1 132.2M182.7 119.8L386.9 132.1M458 119.7L277.4 132M166 119.9L356.6 131.9M474.2 119.9L305 131.9M149.4 120.2L328 131.8M490.4 120.1L331.4 131.8M132.7 120.4L300.9 131.9M506.5 120.3L356.8 131.9M116.1 120.6L274.8 132M522.7 120.5L381.4 132M99.4 120.9L249.6 132.2M538.9 120.8L405.4 132.2M82.6 121.2L224.9 132.4M571.7 121.3L452.3 132.8M48.6 121.8L176.7 133.1M588.3 121.7L475.5 133.1M31.3 122.2L152.9 133.5M605.2 122L498.5 133.6M13.8 122.6L129.1 134M622.2 122.3L521.7 134M-3 123.1L105.3 134.5M639.5 122.7L544.9 134.6M-3 125.6L81.3 135.1M650 124.1L568.4 135.1M-3 128.4L57 135.7M650 127.2L592.2 135.8M-3 131.8L32.4 136.4M650 131L616.4 136.5M198.6 119.6L-3 128.3M431.4 119.4L650 128.2M392.3 119.2L143.5 133.7M233.4 119.3L497 133.5M555.3 121L429 132.5M65.7 121.5L200.7 132.7" stroke-opacity="0.15" stroke-width="0.42"/>
<path d="M28.8 112.3L-3 113.1M600.9 112L650 113.2M58.8 111.9L-3 113.5M569.4 111.6L650 113.6M85.2 111.5L-3 113.9M542 111.3L650 114M109.1 111.2L-3 114.3M517.4 111L650 114.5M151.1 110.8L-3 115.2M474.5 110.6L650 115.3M170.1 110.6L-3 115.7M455.3 110.5L650 115.8M187.9 110.5L-3 116.2M437.2 110.4L650 116.3M204.9 110.4L-3 116.7M420 110.3L650 116.8M221 110.3L-3 117.2M403.7 110.2L650 117.3M236.5 110.2L-3 117.7M388 110.1L650 117.8M251.5 110.1L-3 118.3M372.9 110.1L650 118.4M265.9 110.1L-3 118.9M358.2 110L650 119M279.9 110.1L-3 119.5M344.1 110L650 119.6M306.8 110L-3 120.8M316.8 110L650 120.8M319.8 110L-3 121.5M303.7 110L650 121.5M332.5 110L-3 122.2M290.8 110L650 122.2M345 110L-3 122.9M278.1 110.1L650 123M357.2 110L43 122M265.6 110.1L595.2 121.8M369.3 110.1L82.5 121.2M253.3 110.1L552.4 121M381.3 110.1L116.4 120.6M241.1 110.2L516.6 120.4M393.1 110.1L146.4 120.2M229.1 110.2L485.2 120M404.8 110.2L173.5 119.9M217.1 110.3L457.1 119.7M427.9 110.3L221.9 119.4M193.5 110.5L407.4 119.3M439.3 110.4L243.8 119.2M181.8 110.5L385 119.1M450.7 110.4L264.7 119.1M170.2 110.6L363.6 119M462 110.5L284.7 119M158.5 110.7L343.3 119M473.3 110.6L303.9 119M146.9 110.8L323.7 119M484.6 110.7L322.4 119M135.3 111L304.7 119M495.9 110.8L340.5 119M123.6 111.1L286.3 119M507.2 110.9L358.1 119M112 111.2L268.3 119.1M518.5 111L375.3 119.1M100.3 111.3L250.7 119.2M541.2 111.3L408.9 119.3M76.8 111.6L216.3 119.4M552.7 111.4L425.4 119.4M64.9 111.8L199.4 119.6M564.1 111.5L441.8 119.5M53 111.9L182.7 119.8M575.7 111.7L458 119.7M41 112.1L166 119.9M587.3 111.8L474.2 119.9M28.8 112.3L149.4 120.2M599.1 112L490.4 120.1M16.6 112.5L132.7 120.4M610.9 112.2L506.5 120.3M4.2 112.7L116.1 120.6M622.8 112.4L522.7 120.5M-3 113.2L99.4 120.9M634.9 112.5L538.9 120.8M-3 114.5L82.6 121.2M650 113.8L571.7 121.3M-3 117.3L48.6 121.8M650 115.4L588.3 121.7M-3 119L31.3 122.2M650 117.1L605.2 122M-3 120.9L13.8 122.6M650 119.1L622.2 122.3M130.9 111L-3 114.8M495.1 110.8L650 114.9M293.5 110L-3 120.1M330.3 110L650 120.2M416.4 110.2L198.6 119.6M205.3 110.4L431.4 119.4M529.8 111.1L392.3 119.2M88.6 111.5L233.4 119.3M647.1 112.7L555.3 121M-3 115.8L65.7 121.5" stroke-opacity="0.085" stroke-width="0.4"/>
<path d="M622.3 104.5L650 104.9M23.6 104.5L-3 105M598.6 104.3L650 105.1M44.3 104.3L-3 105.1M577.6 104.1L650 105.3M63.2 104.1L-3 105.3M558.4 103.9L650 105.4M80.7 104L-3 105.5M540.8 103.8L650 105.6M97 103.8L-3 105.7M524.4 103.7L650 105.8M112.3 103.7L-3 105.8M509 103.6L650 106M140.4 103.5L-3 106.2M480.8 103.4L650 106.4M153.5 103.5L-3 106.4M467.7 103.3L650 106.6M166.1 103.4L-3 106.6M455.1 103.3L650 106.8M178.1 103.3L-3 106.8M443 103.2L650 107M189.8 103.3L-3 107.1M431.4 103.1L650 107.2M201 103.2L-3 107.3M420.1 103.1L650 107.4M211.9 103.2L-3 107.5M409.2 103.1L650 107.6M222.4 103.1L-3 107.7M398.6 103L650 107.9M232.7 103.1L-3 108M388.3 103L650 108.1M252.5 103L-3 108.4M368.4 103L650 108.6M262.1 103L-3 108.7M358.8 103L650 108.8M271.5 103L-3 109M349.4 102.9L650 109.1M280.7 103L-3 109.2M340.1 102.9L650 109.4M289.7 103L-3 109.5M331 102.9L650 109.6M298.6 102.9L-3 109.8M322.1 102.9L650 109.9M307.3 102.9L-3 110.1M313.3 102.9L650 110.2M316 102.9L-3 110.4M304.6 102.9L650 110.5M324.4 102.9L-3 110.7M296 103L650 110.8M341.1 102.9L-3 111.3M279.1 103L650 111.5M349.3 102.9L-3 111.7M270.8 103L650 111.8M357.4 103L-3 112M262.6 103L650 112.1M365.4 103L-3 112.4M254.5 103L650 112.5M373.4 103L-3 112.7M246.4 103L638.5 112.6M381.3 103L28.8 112.3M238.4 103.1L600.9 112M389.1 103L58.8 111.9M230.4 103.1L569.4 111.6M396.9 103L85.2 111.5M222.5 103.1L542 111.3M404.6 103.1L109.1 111.2M214.6 103.2L517.4 111M419.9 103.1L151.1 110.8M199 103.2L474.5 110.6M427.5 103.1L170.1 110.6M191.2 103.3L455.3 110.5M435.1 103.2L187.9 110.5M183.5 103.3L437.2 110.4M442.6 103.2L204.9 110.4M175.8 103.3L420 110.3M450.2 103.2L221 110.3M168 103.4L403.7 110.2M457.7 103.3L236.5 110.2M160.3 103.4L388 110.1M465.2 103.3L251.5 110.1M152.6 103.5L372.9 110.1M472.6 103.3L265.9 110.1M144.9 103.5L358.2 110M480.1 103.4L279.9 110.1M137.3 103.6L344.1 110M495.1 103.5L306.8 110M121.9 103.7L316.8 110M502.5 103.5L319.8 110M114.1 103.7L303.7 110M510 103.6L332.5 110M106.4 103.8L290.8 110M517.5 103.6L345 110M98.7 103.8L278.1 110.1M525 103.7L357.2 110M90.9 103.9L265.6 110.1M532.5 103.7L369.3 110.1M83.1 104L253.3 110.1M540 103.8L381.3 110.1M75.3 104L241.1 110.2M547.6 103.8L393.1 110.1M67.5 104.1L229.1 110.2M555.2 103.9L404.8 110.2M59.6 104.2L217.1 110.3M570.4 104L427.9 110.3M43.7 104.3L193.5 110.5M578.1 104.1L439.3 110.4M35.7 104.4L181.8 110.5M585.8 104.1L450.7 110.4M27.7 104.5L170.2 110.6M593.5 104.2L462 110.5M19.6 104.5L158.5 110.7M601.3 104.3L473.3 110.6M11.5 104.6L146.9 110.8M609.1 104.4L484.6 110.7M3.3 104.7L135.3 111M617 104.4L495.9 110.8M-3 104.9L123.6 111.1M624.9 104.5L507.2 110.9M-3 105.4L112 111.2M632.9 104.6L518.5 111M-3 105.9L100.3 111.3M649.1 104.8L541.2 111.3M-3 107.2L76.8 111.6M650 105.3L552.7 111.4M-3 107.8L64.9 111.8M650 105.9L564.1 111.5M-3 108.6L53 111.9M650 106.6L575.7 111.7M-3 109.3L41 112.1M650 107.4L587.3 111.8M-3 110.2L28.8 112.3M650 108.2L599.1 112M-3 111.1L16.6 112.5M650 109.1L610.9 112.2M650 110.1L622.8 112.4M650 111.2L634.9 112.5M126.7 103.6L-3 106M494.5 103.5L650 106.2M242.8 103.1L-3 108.2M378.2 103L650 108.3M332.8 102.9L-3 111M287.5 103L650 111.1M412.3 103.1L130.9 111M206.8 103.2L495.1 110.8M487.6 103.4L293.5 110M129.6 103.6L330.3 110M562.8 103.9L416.4 110.2M51.7 104.2L205.3 110.4M641 104.7L529.8 111.1M-3 106.5L88.6 111.5" stroke-opacity="0.045" stroke-width="0.4"/>
<path d="M332 206L1330.6 383.6" stroke="#b07878" stroke-opacity="0.5" stroke-width="0.6"/>
<path d="M-85.3 131.8L332 206" stroke="#a88888" stroke-opacity="0.22" stroke-width="0.6"/>
<path d="M765.7 117.9L-305.7 335.4" stroke="#7c84a0" stroke-opacity="0.38" stroke-width="0.6"/>
</g>
<use href="#i21" x="264" y="276.1"/>
<use href="#i11" x="281.1" y="289.6"/>
<use href="#i22" x="349.5" y="302.4"/>
<use href="#i19" x="275.3" y="126.7"/>
<use href="#i17" x="427.1" y="227.5"/>
<use href="#i16" x="243.3" y="248.3"/>
<use href="#i18" x="428" y="223.9"/>
<use href="#i10" x="403" y="139.5"/>
<use href="#i10" x="374" y="294.9"/>
<use href="#i13" x="239.2" y="238.7"/>
<use href="#i14" x="265.5" y="278.9"/>
<use href="#i8" x="394" y="130.5"/>
<use href="#i10" x="246.6" y="255.8"/>
<use href="#i7" x="380.7" y="120.9"/>
<use href="#i3" x="397" y="280.4"/>
<use href="#i7" x="255.7" y="269.3"/>
<use href="#i7" x="383" y="122"/>
<use href="#i8" x="233.9" y="191.5"/>
<use href="#i0" x="288.2" y="295.4"/>
<use href="#i17" x="419.5" y="252.6"/>
<use href="#i23" x="430.6" y="214.2"/>
<use href="#i18" x="422.1" y="165.4"/>
<use href="#i12" x="344.5" y="304.9"/>
<use href="#i11" x="287.5" y="117.4"/>
<use href="#i13" x="372.9" y="115.8"/>
<use href="#i2" x="428.7" y="229"/>
<use href="#i13" x="336.3" y="305.9"/>
<use href="#i9" x="358.7" y="110.5"/>
<use href="#i22" x="400" y="133.8"/>
<use href="#i5" x="234.1" y="226.2"/>
<use href="#i18" x="430.3" y="221.4"/>
<use href="#i10" x="360.6" y="301.8"/>
<use href="#i5" x="407.1" y="271.7"/>
<use href="#i19" x="431.1" y="215.4"/>
<use href="#i7" x="371.8" y="114.8"/>
<use href="#i21" x="232.5" y="192.6"/>
<use href="#i14" x="378.4" y="117.6"/>
<use href="#i23" x="380.2" y="118.3"/>
<use href="#i7" x="299.9" y="301.6"/>
<use href="#i5" x="419.8" y="157.7"/>
<use href="#i17" x="414" y="264.3"/>
<use href="#i13" x="428.2" y="177.4"/>
<use href="#i2" x="409.9" y="142.7"/>
<use href="#i0" x="415.7" y="262.1"/>
<use href="#i22" x="250.8" y="266.2"/>
<use href="#i17" x="286.3" y="296.3"/>
<use href="#i18" x="427.6" y="238.1"/>
<use href="#i18" x="239.5" y="246.9"/>
<use href="#i23" x="324.2" y="105.7"/>
<use href="#i8" x="330.1" y="105.2"/>
<use href="#i19" x="325.5" y="307.1"/>
<use href="#i12" x="384.7" y="120"/>
<use href="#i14" x="231.1" y="196.9"/>
<use href="#i17" x="302.5" y="109.4"/>
<use href="#i5" x="233.5" y="230.3"/>
<use href="#i14" x="350.4" y="305.9"/>
<use href="#i12" x="232.6" y="226.9"/>
<use href="#i8" x="376.9" y="297.1"/>
<use href="#i4" x="297.2" y="110.7"/>
<use href="#i11" x="360.5" y="303.7"/>
<use href="#i11" x="369.3" y="300.8"/>
<use href="#i5" x="381.9" y="117.6"/>
<use href="#i12" x="239.6" y="249.3"/>
<use href="#i17" x="354.2" y="106.7"/>
<use href="#i12" x="297.7" y="302.2"/>
<use href="#i14" x="230" y="210.2"/>
<use href="#i1" x="230.1" y="199.5"/>
<use href="#i7" x="389.5" y="290.4"/>
<use href="#i1" x="325.1" y="308"/>
<use href="#i18" x="433.2" y="193.4"/>
<use href="#i16" x="302.8" y="304.1"/>
<use href="#i6" x="400.9" y="281.6"/>
<use href="#i7" x="432" y="185.4"/>
<use href="#i5" x="338" y="104.1"/>
<use href="#i7" x="325.4" y="308.2"/>
<use href="#i7" x="421.3" y="255.8"/>
<use href="#i0" x="230.2" y="217.4"/>
<use href="#i15" x="234.7" y="174.1"/>
<use href="#i3" x="267.8" y="286"/>
<use href="#i0" x="268.2" y="125.9"/>
<use href="#i23" x="229.4" y="201.4"/>
<use href="#i9" x="241.2" y="157.9"/>
<use href="#i22" x="434.7" y="205.5"/>
<use href="#i21" x="433.2" y="225.3"/>
<use href="#i5" x="318.5" y="103.9"/>
<use href="#i19" x="434.4" y="217.1"/>
<use href="#i23" x="238.7" y="162.1"/>
<use href="#i18" x="349.4" y="104.4"/>
<use href="#i12" x="430" y="173.9"/>
<use href="#i10" x="427.1" y="245.9"/>
<use href="#i19" x="354.2" y="306.8"/>
<use href="#i9" x="267.7" y="286.8"/>
<use href="#i18" x="356.8" y="306.3"/>
<use href="#i19" x="342.6" y="308.9"/>
<use href="#i14" x="431.4" y="177.4"/>
<use href="#i21" x="396.8" y="125.4"/>
<use href="#i2" x="287.9" y="112.4"/>
<use href="#i13" x="229" y="216.3"/>
<use href="#i9" x="316.2" y="308.3"/>
<use href="#i22" x="321" y="103"/>
<use href="#i6" x="377.1" y="112.7"/>
<use href="#i17" x="271.2" y="290"/>
<use href="#i10" x="345.3" y="308.9"/>
<use href="#i16" x="435.2" y="217.4"/>
<use href="#i16" x="239.5" y="158.9"/>
<use href="#i22" x="254.4" y="136.9"/>
<use href="#i10" x="422" y="154.1"/>
<use href="#i16" x="309.7" y="307.4"/>
<use href="#i1" x="397.5" y="125.2"/>
<use href="#i1" x="428.4" y="245.1"/>
<use href="#i13" x="386.7" y="294.5"/>
<use href="#i7" x="410.7" y="274.1"/>
<use href="#i14" x="300.5" y="106.7"/>
<use href="#i21" x="275" y="118.8"/>
<use href="#i17" x="384.4" y="115.9"/>
<use href="#i4" x="257.2" y="278.4"/>
<use href="#i2" x="398.5" y="286.2"/>
<use href="#i16" x="230.6" y="182"/>
<use href="#i21" x="409.9" y="136.7"/>
<use href="#i17" x="408.1" y="134.6"/>
<use href="#i23" x="403.6" y="281.8"/>
<use href="#i1" x="421" y="151.4"/>
<use href="#i7" x="284.9" y="299"/>
<use href="#i21" x="430.2" y="241.5"/>
<use href="#i19" x="425.5" y="159.4"/>
<use href="#i20" x="234.8" y="167.9"/>
<use href="#i11" x="412.6" y="272.3"/>
<use href="#i20" x="409.1" y="276.5"/>
<use href="#i11" x="289" y="110.7"/>
<use href="#i4" x="229.8" y="227.5"/>
<use href="#i8" x="234.7" y="167.8"/>
<use href="#i17" x="347.1" y="102.4"/>
<use href="#i19" x="261.9" y="128.3"/>
<use href="#i2" x="257.1" y="132.9"/>
<use href="#i8" x="307.6" y="104.1"/>
<use href="#i11" x="301.8" y="306"/>
<use href="#i11" x="261" y="129"/>
<use href="#i18" x="360.2" y="306.7"/>
<use href="#i10" x="228.9" y="223.5"/>
<use href="#i10" x="436.6" y="198.8"/>
<use href="#i9" x="397.5" y="124"/>
<use href="#i17" x="232.8" y="172.2"/>
<use href="#i9" x="434.9" y="226.4"/>
<use href="#i7" x="380.1" y="299"/>
<use href="#i2" x="314.7" y="102.4"/>
<use href="#i10" x="390" y="118.3"/>
<use href="#i3" x="257.2" y="279.2"/>
<use href="#i1" x="370.6" y="108"/>
<use href="#i4" x="406.3" y="131.4"/>
<use href="#i22" x="395.9" y="122.3"/>
<use href="#i13" x="419.8" y="147.8"/>
<use href="#i14" x="274.9" y="293.8"/>
<use href="#i3" x="243.3" y="261.9"/>
<use href="#i6" x="228.5" y="188.1"/>
<use href="#i11" x="249.1" y="270.1"/>
<use href="#i10" x="358" y="307.6"/>
<use href="#i10" x="235.7" y="247.4"/>
<use href="#i21" x="298" y="106.2"/>
<use href="#i12" x="312.7" y="309.1"/>
<use href="#i4" x="227.1" y="200.7"/>
<use href="#i18" x="395.6" y="121.7"/>
<use href="#i18" x="286.9" y="110.7"/>
<use href="#i2" x="423.4" y="153"/>
<use href="#i10" x="232" y="173.6"/>
<use href="#i11" x="340.3" y="100.7"/>
<use href="#i16" x="382.1" y="298.3"/>
<use href="#i11" x="374" y="302.3"/>
<use href="#i4" x="307.5" y="103.3"/>
<use href="#i18" x="420.3" y="147.9"/>
<use href="#i14" x="434.6" y="180.8"/>
<use href="#i0" x="376" y="109.8"/>
<use href="#i4" x="434.3" y="179.7"/>
<use href="#i4" x="429.4" y="164.9"/>
<use href="#i15" x="436.3" y="189.2"/>
<use href="#i21" x="351" y="101.9"/>
<circle cx="332" cy="206" r="105.3" fill="url(#sg)"/>
<circle cx="332" cy="206" r="105.3" fill="url(#sd)"/>
<path d="M332.3 100.3L338.8 100.7L345.3 101.9L351.8 103.9L358.3 106.6L364.8 110L371.1 114.2L377.2 119.1L383.1 124.7L388.7 130.9L393.9 137.8L398.8 145.2L403.2 153.1L407.1 161.5L410.4 170.3L413.2 179.3L415.4 188.6L417 197.9L418 207.3L418.3 216.7L418 225.9L417 234.9L415.5 243.7L413.4 252L410.7 259.9L407.5 267.4L403.8 274.3L399.6 280.6L395.1 286.3L390.1 291.3L384.9 295.7L379.5 299.4L373.8 302.3M332.3 100.3L337 100.8L341.8 102L346.6 104L351.4 106.7L356.2 110.3L360.9 114.5L365.5 119.6L369.9 125.3L374.2 131.8L378.1 138.9L381.8 146.6L385.2 154.8L388.2 163.5L390.7 172.6L392.9 182L394.6 191.7L395.8 201.4L396.5 211.1L396.8 220.8L396.5 230.3L395.8 239.6L394.6 248.5L392.9 257L390.8 265L388.4 272.4L385.5 279.2L382.3 285.4L378.9 290.9L375.1 295.7L371.2 299.7L367 303.1L362.8 305.6L358.4 307.5M332.3 100.3L334.9 100.8L337.6 102L340.3 104.1L343 106.8L345.7 110.4L348.4 114.8L351 119.9L353.5 125.8L355.9 132.4L358.2 139.6L360.3 147.5L362.2 156L363.9 164.9L365.4 174.3L366.6 183.9L367.6 193.8L368.3 203.8L368.7 213.7L368.8 223.6L368.7 233.3L368.2 242.8L367.5 251.8L366.5 260.4L365.3 268.4L363.9 275.8L362.2 282.6L360.4 288.7L358.4 294L356.2 298.6L354 302.5L351.6 305.5L349.2 307.8L346.7 309.4L344.2 310.2M332.3 100.3L332.7 100.8L333 102L333.4 104.1L333.8 106.9L334.1 110.5L334.5 114.9L334.8 120L335.2 125.9L335.5 132.6L335.8 139.9L336 147.9L336.3 156.4L336.5 165.5L336.7 174.9L336.8 184.6L336.9 194.6L337 204.7L337 214.8L337 224.7L337 234.5L336.9 244L336.7 253.1L336.6 261.7L336.4 269.7L336.2 277.2L335.9 283.9L335.7 290L335.4 295.3L335.1 299.8L334.7 303.5L334.4 306.5L334.1 308.7L333.7 310.1L333.4 310.8M332.3 100.3L330.4 100.8L328.4 102L326.4 104.1L324.4 106.9L322.4 110.4L320.4 114.8L318.5 119.9L316.6 125.8L314.8 132.4L313 139.7L311.4 147.7L310 156.1L308.7 165.1L307.5 174.5L306.5 184.2L305.8 194L305.2 204.1L304.8 214.1L304.7 224L304.8 233.7L305 243.2L305.5 252.2L306.2 260.8L307.1 268.8L308.1 276.3L309.3 283L310.6 289.1L312.1 294.4L313.6 299L315.3 302.8L317 305.8L318.8 308.1L320.6 309.6L322.5 310.4M332.3 100.3L328.2 100.8L324.1 102L319.9 104L315.7 106.8L311.5 110.3L307.4 114.6L303.3 119.6L299.4 125.4L295.7 131.9L292.2 139.1L288.9 146.8L285.9 155.1L283.2 163.9L280.9 173L279 182.5L277.4 192.2L276.3 202L275.6 211.8L275.4 221.5L275.5 231.1L276.1 240.4L277.1 249.3L278.5 257.8L280.3 265.8L282.4 273.2L284.9 280.1L287.6 286.2L290.7 291.7L293.9 296.4L297.3 300.4L300.9 303.7L304.6 306.2L308.5 308M332.3 100.3L326.4 100.7L320.4 101.9L314.3 103.9L308.3 106.6L302.3 110.1L296.4 114.3L290.7 119.2L285.2 124.8L279.9 131.1L275 138L270.4 145.5L266.3 153.5L262.6 162L259.4 170.8L256.7 179.9L254.6 189.2L253.1 198.7L252.2 208.2L251.8 217.6L252 226.9L252.9 236L254.3 244.7L256.2 253.1L258.7 261.1L261.6 268.5L265 275.4L268.9 281.7L273.1 287.3L277.6 292.3L282.5 296.6L287.5 300.2L292.8 303.1M332.3 100.3L324.9 100.7L317.5 101.9L310.1 103.8L302.7 106.4L295.4 109.8L288.3 113.8L281.5 118.6L274.9 124L268.6 130.1L262.8 136.7L257.5 143.9L252.6 151.5L248.3 159.6L244.6 168L241.5 176.7L239.1 185.6L237.3 194.6L236.2 203.7L235.8 212.8L236.1 221.7L237 230.5L238.7 239.1L240.9 247.3L243.8 255.2L247.2 262.6L251.2 269.5L255.7 275.9L260.7 281.8L266 287.1L271.7 291.7M332.3 100.3L324 100.7L315.7 101.8L307.4 103.6L299.3 106.2L291.3 109.4L283.6 113.3L276.2 117.9L269.1 123.1L262.4 128.9L256.2 135.2L250.6 142.1L245.5 149.3L240.9 157L237.1 165L233.8 173.2L231.3 181.7L229.5 190.3L228.3 198.9L227.9 207.6L228.2 216.2L229.2 224.6L230.9 232.9L233.2 241L236.2 248.7L239.8 256.1M332.3 100.3L323.7 100.6L315.1 101.7L306.6 103.5L298.3 105.9L290.2 109.1L282.4 112.8L275 117.2L267.9 122.2M332.3 100.3L341 100.6L349.6 101.7L358 103.4M332.3 100.3L340.8 100.7L349.3 101.8L357.7 103.6L365.9 106.1L374 109.3L381.8 113.2L389.3 117.8L396.4 122.9L403.1 128.7L409.4 134.9L415 141.7L420.1 148.9L424.6 156.5L428.5 164.4L431.7 172.5L434.2 180.9L436 189.4L437.1 197.9L437.4 206.5L437.1 215L436 223.4L434.3 231.7M332.3 100.3L340 100.7L347.8 101.9L355.6 103.7L363.3 106.4L370.8 109.7L378.2 113.7L385.3 118.5L392.1 123.8L398.5 129.8L404.5 136.4L410 143.5L415 151.1L419.4 159.1L423.2 167.4L426.3 176L428.8 184.8L430.5 193.8L431.6 202.8L432 211.8L431.6 220.6L430.6 229.4L428.8 237.9L426.5 246.1L423.4 253.9L419.8 261.3L415.7 268.3L411 274.7L405.8 280.6L400.2 286M353.4 104.5L351.7 104.5L349.8 104.6L347.8 104.6L345.6 104.6L343.3 104.7L341 104.7L338.5 104.7L336 104.7L333.5 104.7L330.9 104.7L328.4 104.7L325.9 104.7L323.5 104.7L321.1 104.6L318.8 104.6L316.7 104.6L314.7 104.5L312.8 104.5L311.1 104.5L309.6 104.4L308.2 104.4L307.1 104.3L306.1 104.3L305.4 104.2L304.9 104.1L304.6 104.1L304.5 104M360.1 104L360.2 104L360.1 104.1L359.8 104.2L359.2 104.2L358.5 104.3L357.5 104.3L356.3 104.4L355 104.4L353.4 104.5M374.2 116.5L370.9 116.7L367.2 116.8L363.2 117L358.9 117.1L354.4 117.2L349.7 117.2L344.8 117.3L339.7 117.3L334.6 117.3L329.5 117.3L324.4 117.3L319.4 117.3L314.5 117.2L309.8 117.1L305.3 117L301.1 116.9L297.1 116.8L293.5 116.6L290.2 116.5L287.4 116.3L284.9 116.1L282.8 115.9L281.1 115.7L279.8 115.5L279 115.4L278.6 115.2L278.6 115M386.1 115L386.1 115.2L385.6 115.4L384.8 115.6L383.5 115.8L381.8 116L379.6 116.2L377.1 116.4L374.2 116.5M392.7 136L388 136.4L382.8 136.7L377.2 137.1L371 137.3L364.5 137.6L357.6 137.8L350.5 137.9L343.1 138L335.7 138L328.2 138L320.8 138L313.5 137.9L306.3 137.7L299.5 137.5L293 137.2L286.9 136.9L281.3 136.6L276.2 136.2L271.6 135.8L267.6 135.4L264.2 135L261.5 134.5L259.3 134.1L257.8 133.6L256.8 133.1L256.5 132.7M408.2 132.8L407.8 133.3L406.9 133.8L405.3 134.3L403 134.7L400.2 135.2L396.7 135.6L392.7 136M407.1 161.5L401.5 162.3L395.1 162.9L388.2 163.5L380.6 164.1L372.5 164.5L363.9 164.9L355 165.2L345.8 165.4L336.5 165.5L327.1 165.4L317.8 165.3L308.7 165.1L299.8 164.8L291.3 164.4L283.2 163.9L275.7 163.3L268.8 162.7L262.6 162L257.1 161.2L252.3 160.4L248.3 159.6L245.1 158.7L242.6 157.9L240.9 157L240 156.1L239.8 155.2M424.9 155.6L424.6 156.5L423.7 157.3L421.9 158.2L419.4 159.1L416.1 159.9L412 160.7L407.1 161.5M415.9 190.9L409.7 192L402.7 193.1L394.9 194.1L386.5 194.9L377.4 195.7L367.8 196.3L357.8 196.7L347.4 197L336.9 197.1L326.4 197.1L315.9 196.9L305.6 196.5L295.6 196L286.1 195.4L277.1 194.6L268.8 193.7L261.1 192.7L254.2 191.6L248.1 190.4L242.9 189.2L238.5 187.9L235.1 186.5L232.5 185.2L230.8 183.8L229.9 182.4M434.8 181.6L434.7 183L433.7 184.3L431.9 185.7L429.3 187.1L425.7 188.4L421.2 189.7L415.9 190.9M418.2 221.3L411.9 222.9L404.7 224.3L396.7 225.6L388 226.8L378.7 227.7L368.8 228.5L358.4 229.1L347.8 229.5L337 229.7L326.1 229.6L315.3 229.4L304.7 228.9L294.4 228.2L284.6 227.4L275.4 226.3L266.8 225.1L258.9 223.8L251.8 222.3L245.6 220.7L240.3 219L235.8 217.3L232.3 215.5L229.7 213.7L228 211.9L227.1 210.1M437.3 210.8L436.4 212.6L434.6 214.4L431.9 216.2L428.2 218L423.7 219.7L418.2 221.3M414 250L407.9 251.8L401 253.4L393.4 254.9L385.1 256.2L376.2 257.4L366.8 258.3L357 258.9L346.9 259.4L336.6 259.6L326.3 259.5L316.1 259.2L306 258.7L296.3 257.9L286.9 256.9L278.1 255.7L269.9 254.3L262.4 252.8L255.7 251.1L249.7 249.2L244.6 247.3L240.3 245.3L236.9 243.2L234.3 241.1L232.6 239M431.6 239.8L429.8 241.9L427.1 244L423.6 246.1L419.2 248.1L414 250M403.8 274.3L398.3 276.1L392.2 277.7L385.5 279.2L378.2 280.6L370.4 281.7L362.2 282.6L353.7 283.3L344.9 283.7L335.9 283.9L327 283.9L318 283.6L309.3 283L300.8 282.3L292.6 281.3L284.9 280.1L277.7 278.7L271.1 277.1L265 275.4L259.7 273.5L255.1 271.6L251.2 269.5L248.1 267.4L245.7 265.3M418.2 266.1L415.7 268.3L412.4 270.4L408.5 272.4L403.8 274.3M388.9 292.5L384.5 294L379.5 295.5L374.2 296.8L368.3 297.9L362.2 298.9L355.7 299.7L348.9 300.2L342 300.6L335 300.8L327.9 300.7L320.9 300.5L314 300L307.3 299.4L300.9 298.5L294.7 297.5L289 296.3L283.7 294.9L278.8 293.4L274.5 291.8L270.7 290.1L267.4 288.3L264.8 286.4M398.8 287.2L396.1 289L392.7 290.8L388.9 292.5M367.8 304.7L364.3 305.7L360.6 306.7L356.6 307.5L352.4 308.1L347.9 308.7L343.3 309.1L338.7 309.4L333.9 309.5L329.1 309.5L324.4 309.3L319.7 309L315.1 308.5L310.7 307.9L306.5 307.2L302.6 306.3L298.9 305.3L295.5 304.3" stroke="#3c3c3c" stroke-opacity="0.55" stroke-width="0.4" fill="none"/>
<use href="#i21" x="287.5" y="300.9"/>
<use href="#i2" x="231.3" y="235.6"/>
<use href="#i5" x="301.5" y="306.3"/>
<use href="#i23" x="227.8" y="192.2"/>
<use href="#i10" x="369.3" y="304.2"/>
<use href="#i19" x="236.7" y="249.8"/>
<use href="#i1" x="227" y="207.1"/>
<use href="#i11" x="436.6" y="220"/>
<use href="#i14" x="390.1" y="293.5"/>
<use href="#i14" x="228" y="191"/>
<use href="#i20" x="333" y="310.8"/>
<use href="#i3" x="428.7" y="163.3"/>
<use href="#i16" x="316.6" y="309.6"/>
<use href="#i13" x="392.6" y="291.7"/>
<use href="#i23" x="408.8" y="133.2"/>
<use href="#i16" x="326.4" y="310.6"/>
<use href="#i17" x="426.7" y="158.9"/>
<use href="#i7" x="229.9" y="229.6"/>
<use href="#i0" x="269.8" y="120.8"/>
<use href="#i2" x="231.3" y="234.9"/>
<use href="#i5" x="315.9" y="101.6"/>
<use href="#i19" x="383.8" y="113.7"/>
<use href="#i1" x="361.4" y="104.4"/>
<use href="#i11" x="397.2" y="288.3"/>
<use href="#i3" x="272.1" y="291.6"/>
<use href="#i2" x="230.3" y="180"/>
<use href="#i23" x="316.5" y="101.5"/>
<use href="#i21" x="373.7" y="108.8"/>
<use href="#i4" x="229.7" y="228.1"/>
<use href="#i14" x="358.3" y="307.3"/>
<use href="#i15" x="260.7" y="282.2"/>
<use href="#i7" x="235" y="166"/>
<use href="#i17" x="380.4" y="112"/>
<use href="#i13" x="268.6" y="288.9"/>
<use href="#i18" x="247.4" y="267.1"/>
<use href="#i0" x="345.2" y="309.6"/>
<use href="#i5" x="278.2" y="115.5"/>
<use href="#i6" x="242.4" y="259.4"/>
<use href="#i1" x="276.7" y="294.3"/>
<use href="#i3" x="265.2" y="124.7"/>
<use href="#i17" x="281.1" y="297"/>
<use href="#i17" x="243.6" y="149.5"/>
<use href="#i6" x="227.8" y="214.3"/>
<use href="#i0" x="437" y="196.8"/>
<use href="#i4" x="271.9" y="291"/>
<use href="#i7" x="417" y="143.5"/>
<use href="#i19" x="406.6" y="131.5"/>
<use href="#i1" x="358.3" y="306.7"/>
<use href="#i14" x="425.8" y="158"/>
<use href="#i23" x="367.1" y="304.1"/>
<use href="#i11" x="303.1" y="104.9"/>
<use href="#i21" x="436.4" y="217.1"/>
<use href="#i1" x="436.4" y="193.6"/>
<use href="#i20" x="228.5" y="217.1"/>
<use href="#i16" x="307" y="103.9"/>
<use href="#i23" x="379.7" y="112.1"/>
<use href="#i15" x="436.9" y="202.9"/>
<use href="#i11" x="357.3" y="103.8"/>
<use href="#i7" x="361.3" y="104.9"/>
<use href="#i0" x="436.9" y="207.1"/>
<use href="#i9" x="321" y="309.1"/>
<use href="#i21" x="247.3" y="144.8"/>
<use href="#i11" x="229.4" y="188.7"/>
<use href="#i0" x="408.6" y="133.9"/>
<use href="#i20" x="394.3" y="289.3"/>
<use href="#i2" x="338.1" y="309.4"/>
<use href="#i5" x="257.5" y="277.7"/>
<use href="#i7" x="322.4" y="309"/>
<use href="#i15" x="386.5" y="294.4"/>
<use href="#i22" x="287.2" y="299.1"/>
<use href="#i1" x="388.9" y="292.8"/>
<use href="#i20" x="366.1" y="106.7"/>
<use href="#i22" x="320.5" y="308.6"/>
<use href="#i17" x="235.8" y="243.7"/>
<use href="#i16" x="310.8" y="103.5"/>
<use href="#i12" x="229.5" y="190.7"/>
<use href="#i10" x="386.2" y="116.1"/>
<use href="#i11" x="329" y="309.1"/>
<use href="#i16" x="426.5" y="160.9"/>
<use href="#i19" x="411.6" y="272.6"/>
<use href="#i20" x="233.1" y="235.1"/>
<use href="#i2" x="231.4" y="228.5"/>
<use href="#i22" x="316.3" y="102.7"/>
<use href="#i17" x="392.1" y="120.2"/>
<use href="#i5" x="433" y="179.4"/>
<use href="#i19" x="435.9" y="199.1"/>
<use href="#i11" x="245.6" y="149"/>
<use href="#i17" x="353.1" y="103.7"/>
<use href="#i3" x="342.6" y="102.2"/>
<use href="#i10" x="422.4" y="153.9"/>
<use href="#i15" x="232.8" y="231.9"/>
<use href="#i9" x="257.1" y="275.7"/>
<use href="#i18" x="271.7" y="121.9"/>
<use href="#i3" x="426.7" y="163"/>
<use href="#i8" x="344.6" y="307.5"/>
<use href="#i15" x="237.5" y="165.4"/>
<use href="#i23" x="248.7" y="264.9"/>
<use href="#i7" x="237.1" y="243.8"/>
<use href="#i19" x="233.4" y="177.7"/>
<use href="#i16" x="428.8" y="168.8"/>
<use href="#i6" x="312.1" y="104.4"/>
<use href="#i1" x="260.1" y="132.3"/>
<use href="#i11" x="236.7" y="168.2"/>
<use href="#i4" x="393.6" y="287.6"/>
<use href="#i6" x="435.2" y="207.5"/>
<use href="#i6" x="231.5" y="222.4"/>
<use href="#i6" x="387.1" y="291.8"/>
<use href="#i14" x="389" y="290.6"/>
<use href="#i6" x="416.2" y="145.8"/>
<use href="#i13" x="430.9" y="233.7"/>
<use href="#i4" x="231.3" y="190.2"/>
<use href="#i19" x="422.8" y="253.4"/>
<use href="#i21" x="339.2" y="307"/>
<use href="#i15" x="262.8" y="279.6"/>
<use href="#i15" x="434.6" y="198.2"/>
<use href="#i20" x="280.4" y="292.7"/>
<use href="#i0" x="406.8" y="275"/>
<use href="#i21" x="333.2" y="306.8"/>
<use href="#i18" x="231.9" y="215.8"/>
<use href="#i23" x="310.1" y="303.8"/>
<use href="#i11" x="277.7" y="290"/>
<use href="#i6" x="273.4" y="122.8"/>
<use href="#i7" x="410.2" y="270"/>
<use href="#i0" x="312.9" y="105.7"/>
<use href="#i20" x="432.4" y="189.6"/>
<use href="#i1" x="342.8" y="305.2"/>
<use href="#i15" x="421" y="253.3"/>
<use href="#i6" x="430.7" y="227.3"/>
<use href="#i18" x="366.8" y="110.3"/>
<use href="#i19" x="384.5" y="291"/>
<use href="#i5" x="386.4" y="289.7"/>
<use href="#i22" x="433" y="207.9"/>
<use href="#i13" x="276.8" y="288"/>
<use href="#i10" x="389.5" y="122.3"/>
<use href="#i16" x="249.1" y="149.7"/>
<use href="#i14" x="412.5" y="144.2"/>
<use href="#i21" x="362.2" y="300.5"/>
<use href="#i22" x="327.3" y="304.6"/>
<use href="#i10" x="272.8" y="284.8"/>
<use href="#i5" x="278.1" y="121.5"/>
<use href="#i11" x="278.5" y="288.2"/>
<use href="#i16" x="252.3" y="146.4"/>
<use href="#i6" x="282.5" y="290.5"/>
<use href="#i16" x="272.6" y="125.8"/>
<use href="#i22" x="422.4" y="247.4"/>
<use href="#i21" x="374" y="294.8"/>
<use href="#i3" x="282.9" y="119.2"/>
<use href="#i4" x="289.7" y="115.6"/>
<use href="#i9" x="421.8" y="161.6"/>
<use href="#i0" x="311.5" y="108.2"/>
<use href="#i17" x="422.7" y="245.6"/>
<use href="#i17" x="428.5" y="180.7"/>
<use href="#i3" x="334.7" y="106.1"/>
<use href="#i19" x="395.8" y="280.5"/>
<use href="#i4" x="429.9" y="220.2"/>
<use href="#i4" x="362.9" y="111.2"/>
<use href="#i18" x="327.6" y="302.6"/>
<use href="#i20" x="429.7" y="189.8"/>
<use href="#i2" x="251.3" y="258.7"/>
<use href="#i9" x="258.4" y="141.3"/>
<use href="#i6" x="377.4" y="291.7"/>
<use href="#i14" x="389.6" y="125.2"/>
<use href="#i2" x="423.2" y="241.5"/>
<use href="#i4" x="425.3" y="173.6"/>
<use href="#i14" x="333.7" y="302"/>
<use href="#i8" x="260.1" y="140"/>
<use href="#i14" x="264" y="273.2"/>
<use href="#i16" x="351.5" y="300"/>
<use href="#i0" x="304.5" y="111.8"/>
<use href="#i2" x="415.1" y="256"/>
<use href="#i18" x="336" y="301.4"/>
<use href="#i18" x="333.2" y="301.3"/>
<use href="#i20" x="428.9" y="214.6"/>
<use href="#i18" x="428.2" y="219.3"/>
<use href="#i16" x="239.3" y="227.5"/>
<use href="#i16" x="346.6" y="299.9"/>
<use href="#i12" x="406.7" y="143.1"/>
<use href="#i14" x="273.6" y="128.9"/>
<use href="#i19" x="374.2" y="117.8"/>
<use href="#i5" x="275.3" y="281.4"/>
<use href="#i19" x="251.5" y="255.5"/>
<use href="#i10" x="259.2" y="265.4"/>
<use href="#i7" x="334.3" y="109.1"/>
<use href="#i7" x="357.4" y="112.4"/>
<use href="#i17" x="299.8" y="293.9"/>
<use href="#i13" x="416.2" y="250.5"/>
<use href="#i18" x="242" y="232.2"/>
<use href="#i20" x="340.3" y="299.1"/>
<use href="#i2" x="260.7" y="266"/>
<use href="#i3" x="262.8" y="140.7"/>
<use href="#i18" x="329.3" y="109.8"/>
<use href="#i5" x="338.2" y="110.1"/>
<use href="#i15" x="265.9" y="270.9"/>
<use href="#i13" x="241.7" y="228.4"/>
<use href="#i3" x="331.3" y="298.7"/>
<use href="#i7" x="246.8" y="167.1"/>
<use href="#i15" x="276.2" y="130"/>
<use href="#i9" x="341.9" y="297.6"/>
<use href="#i7" x="246.3" y="169.3"/>
<use href="#i2" x="263" y="142.5"/>
<use href="#i16" x="424.1" y="184.4"/>
<use href="#i9" x="241" y="220.2"/>
<use href="#i22" x="268.8" y="136.9"/>
<use href="#i17" x="421.1" y="174.2"/>
<use href="#i22" x="408.1" y="259.4"/>
<use href="#i7" x="362.9" y="292.5"/>
<use href="#i12" x="416.2" y="163.1"/>
<use href="#i22" x="375.1" y="121.6"/>
<use href="#i5" x="340.9" y="112.1"/>
<use href="#i19" x="425.3" y="211.1"/>
<use href="#i1" x="300" y="290.7"/>
<use href="#i16" x="248.8" y="241.8"/>
<use href="#i21" x="381.1" y="126.2"/>
<use href="#i2" x="361.1" y="117"/>
<use href="#i13" x="263.8" y="144.3"/>
<use href="#i8" x="422.7" y="222.7"/>
<use href="#i12" x="376.7" y="124.1"/>
<use href="#i1" x="246.5" y="175.4"/>
<use href="#i7" x="412.7" y="248.6"/>
<use href="#i3" x="264.3" y="264.2"/>
<use href="#i17" x="391.2" y="134.4"/>
<use href="#i6" x="408.6" y="153.9"/>
<use href="#i8" x="327" y="113.7"/>
<use href="#i16" x="263.6" y="145.9"/>
<use href="#i14" x="248.8" y="237.5"/>
<use href="#i4" x="242.8" y="202.9"/>
<use href="#i14" x="305.9" y="118.6"/>
<use href="#i0" x="335.4" y="114.9"/>
<use href="#i13" x="416.8" y="235.3"/>
<use href="#i10" x="415.7" y="237.9"/>
<use href="#i23" x="255.6" y="248.1"/>
<use href="#i19" x="378.7" y="280.6"/>
<use href="#i17" x="272.2" y="268.9"/>
<use href="#i19" x="382.6" y="131"/>
<use href="#i18" x="406.7" y="155.5"/>
<use href="#i18" x="265.7" y="261.1"/>
<use href="#i12" x="413.3" y="240.7"/>
<use href="#i0" x="283.9" y="277"/>
<use href="#i1" x="324" y="291.5"/>
<use href="#i19" x="297.1" y="283.9"/>
<use href="#i10" x="308" y="287.9"/>
<use href="#i2" x="248.1" y="219.6"/>
<use href="#i11" x="252.3" y="234.5"/>
<use href="#i16" x="263.8" y="153.2"/>
<use href="#i22" x="253.6" y="171.5"/>
<use href="#i6" x="261.2" y="157.5"/>
<use href="#i6" x="359.4" y="285.7"/>
<use href="#i21" x="294.1" y="128.6"/>
<use href="#i9" x="263.4" y="252.3"/>
<use href="#i21" x="417.3" y="194.2"/>
<use href="#i6" x="343.2" y="120.3"/>
<use href="#i3" x="337.2" y="120.1"/>
<use href="#i10" x="382.7" y="136.1"/>
<use href="#i23" x="275.2" y="143.5"/>
<use href="#i13" x="301.9" y="126.3"/>
<use href="#i9" x="373.7" y="130.8"/>
<use href="#i23" x="404" y="248.7"/>
<use href="#i15" x="269.5" y="258.1"/>
<use href="#i16" x="272.7" y="146.6"/>
<use href="#i0" x="352.1" y="122.9"/>
<use href="#i4" x="405.3" y="162.9"/>
<use href="#i20" x="305.9" y="281.9"/>
<use href="#i15" x="335.6" y="286"/>
<use href="#i11" x="328.4" y="285.3"/>
<use href="#i18" x="350" y="124.4"/>
<use href="#i23" x="413.9" y="196"/>
<use href="#i7" x="319.2" y="283.5"/>
<use href="#i4" x="386.4" y="264.6"/>
<use href="#i19" x="310.2" y="281.1"/>
<use href="#i21" x="266.8" y="248"/>
<use href="#i11" x="371" y="274.2"/>
<use href="#i0" x="305.9" y="129.2"/>
<use href="#i11" x="256.8" y="223.4"/>
<use href="#i20" x="367.6" y="274.8"/>
<use href="#i8" x="367.6" y="133.6"/>
<use href="#i7" x="319.2" y="280.9"/>
<use href="#i17" x="262.1" y="235.7"/>
<use href="#i17" x="258" y="223.8"/>
<use href="#i22" x="399.7" y="243.9"/>
<use href="#i12" x="405.7" y="176.5"/>
<use href="#i16" x="283.3" y="262.7"/>
<use href="#i3" x="371.3" y="137.1"/>
<use href="#i10" x="390.8" y="254.6"/>
<use href="#i9" x="368.3" y="271.3"/>
<use href="#i15" x="407.1" y="186.9"/>
<use href="#i6" x="301.3" y="272.3"/>
<use href="#i0" x="329.6" y="279.2"/>
<use href="#i0" x="318.5" y="277.3"/>
<use href="#i15" x="366.1" y="136.5"/>
<use href="#i8" x="403.7" y="178.4"/>
<use href="#i11" x="271.4" y="162.4"/>
<use href="#i4" x="282" y="257"/>
<use href="#i10" x="301.4" y="269.6"/>
<use href="#i0" x="261.6" y="217.9"/>
<use href="#i11" x="293.6" y="264.8"/>
<use href="#i18" x="285.3" y="149.2"/>
<use href="#i15" x="405.2" y="212.5"/>
<use href="#i10" x="287.4" y="148.1"/>
<use href="#i8" x="353.3" y="272.3"/>
<use href="#i5" x="360.9" y="138.3"/>
<use href="#i6" x="263.3" y="193.5"/>
<use href="#i20" x="264.4" y="187.9"/>
<use href="#i10" x="266.5" y="226.4"/>
<use href="#i16" x="312.3" y="136.6"/>
<use href="#i12" x="385.4" y="156.6"/>
<use href="#i10" x="279.2" y="159.6"/>
<use href="#i1" x="328.8" y="273.4"/>
<use href="#i3" x="300.9" y="142.2"/>
<use href="#i22" x="294.2" y="261.2"/>
<use href="#i14" x="263.9" y="204"/>
<use href="#i21" x="392.8" y="168.5"/>
<use href="#i16" x="385.4" y="158.6"/>
<use href="#i8" x="264.9" y="198.6"/>
<use href="#i3" x="371.9" y="260.6"/>
<use href="#i23" x="401.9" y="201.8"/>
<use href="#i19" x="266.3" y="198.6"/>
<use href="#i21" x="267.3" y="191.3"/>
<use href="#i22" x="397.3" y="182.6"/>
<use href="#i18" x="314" y="267.7"/>
<use href="#i12" x="290.3" y="253.4"/>
<use href="#i7" x="280.2" y="242.3"/>
<use href="#i0" x="369.3" y="258.7"/>
<use href="#i3" x="282" y="244.4"/>
<use href="#i1" x="268.7" y="213.4"/>
<use href="#i20" x="279.6" y="166.9"/>
<use href="#i14" x="277.3" y="170.8"/>
<use href="#i22" x="305.4" y="145.4"/>
<use href="#i13" x="269.2" y="201.7"/>
<use href="#i1" x="309.1" y="262.8"/>
<use href="#i7" x="358.5" y="262.5"/>
<use href="#i1" x="341.2" y="140.2"/>
<use href="#i20" x="294.8" y="254.3"/>
<use href="#i6" x="354.8" y="263.7"/>
<use href="#i21" x="321.4" y="265.9"/>
<use href="#i12" x="396.7" y="203.7"/>
<use href="#i11" x="319.4" y="264.8"/>
<use href="#i13" x="375.3" y="157"/>
<use href="#i19" x="356.5" y="261.8"/>
<use href="#i9" x="347.1" y="142.6"/>
<use href="#i6" x="281.3" y="170.8"/>
<use href="#i19" x="280" y="173.1"/>
<use href="#i12" x="275.9" y="225.1"/>
<use href="#i19" x="362.9" y="257.4"/>
<use href="#i6" x="294" y="250"/>
<use href="#i20" x="377.5" y="245.1"/>
<use href="#i7" x="381.8" y="239.9"/>
<use href="#i15" x="303.8" y="256.1"/>
<use href="#i21" x="384.5" y="172.8"/>
<use href="#i12" x="320.7" y="261.7"/>
<use href="#i22" x="302.2" y="153"/>
<use href="#i18" x="366.1" y="154.6"/>
<use href="#i17" x="307.2" y="255.7"/>
<use href="#i22" x="371.1" y="159.4"/>
<use href="#i21" x="391.3" y="200.2"/>
<use href="#i23" x="383.7" y="175"/>
<use href="#i22" x="390.7" y="207.6"/>
<use href="#i4" x="375.3" y="242.7"/>
<use href="#i6" x="282.7" y="177.3"/>
<use href="#i1" x="361.1" y="253.7"/>
<use href="#i2" x="314.5" y="150"/>
<use href="#i12" x="358.4" y="152.5"/>
<use href="#i3" x="317.5" y="149.9"/>
<use href="#i15" x="387.9" y="215.4"/>
<use href="#i7" x="294.7" y="165.6"/>
<use href="#i11" x="279.5" y="207.1"/>
<use href="#i9" x="331.8" y="149.7"/>
<use href="#i1" x="304.8" y="248.4"/>
<use href="#i8" x="303.8" y="247.7"/>
<use href="#i4" x="314.8" y="153.7"/>
<use href="#i5" x="321.8" y="255.2"/>
<use href="#i8" x="315.5" y="252.9"/>
<use href="#i18" x="360.4" y="248.8"/>
<use href="#i23" x="317.2" y="252.3"/>
<use href="#i17" x="328.6" y="153.4"/>
<use href="#i13" x="377.1" y="179.3"/>
<use href="#i11" x="297.8" y="237.7"/>
<use href="#i1" x="301.7" y="241.2"/>
<use href="#i11" x="378.8" y="184.2"/>
<use href="#i13" x="378.9" y="221.7"/>
<use href="#i12" x="333" y="154.6"/>
<use href="#i0" x="284.8" y="204.4"/>
<use href="#i22" x="307.6" y="244.3"/>
<use href="#i22" x="307.8" y="244.4"/>
<use href="#i14" x="378.7" y="220.6"/>
<use href="#i1" x="330.2" y="157.1"/>
<use href="#i10" x="375.9" y="219.2"/>
<use href="#i21" x="374" y="222.6"/>
<use href="#i17" x="347.2" y="244.5"/>
<use href="#i13" x="301" y="179.9"/>
<use href="#i3" x="321.8" y="166.9"/>
<use href="#i2" x="339.3" y="167.8"/>
<use href="#i17" x="322" y="170.3"/>
<use href="#i2" x="349.4" y="172.1"/>
<use href="#i0" x="366.3" y="197.2"/>
<use href="#i19" x="308.2" y="182.4"/>
<use href="#i9" x="363.1" y="190.9"/>
<use href="#i0" x="347.6" y="229.4"/>
<use href="#i14" x="306.7" y="196.3"/>
<use href="#i5" x="352.6" y="184.2"/>
<use href="#i17" x="353.6" y="220.1"/>
<use href="#i10" x="338.4" y="178.7"/>
<use href="#i7" x="352.5" y="219.5"/>
<use href="#i1" x="312.2" y="215.3"/>
<use href="#i22" x="357.5" y="198.9"/>
<use href="#i5" x="314.5" y="209.9"/>
<use href="#i16" x="326" y="221.6"/>
<use href="#i12" x="315.6" y="209"/>
<use href="#i9" x="317.7" y="193.2"/>
<use href="#i23" x="342.3" y="218.9"/>
<use href="#i2" x="318.3" y="195"/>
<use href="#i20" x="341.9" y="218"/>
<use href="#i3" x="335.7" y="218"/>
<use href="#i8" x="347.1" y="203.6"/>
<use href="#i1" x="338.8" y="193"/>
<use href="#i1" x="332.4" y="194.2"/>
<use href="#i16" x="336.8" y="199.2"/>
<rect x="17" y="34" width="613" height="18" fill="#000" fill-opacity="0.205"/>
<rect x="17" y="387.3" width="613" height="18.2" fill="#000" fill-opacity="0.205"/>
<circle cx="323.2" cy="264.8" r="5.6" fill="#d8d400" fill-opacity="0.78"/>
<circle cx="322.4" cy="263.8" r="2.6" fill="#f4f25a" fill-opacity="0.8"/>
<path d="M17 82.2H630" stroke="#b3bfbe" stroke-width="0.4" stroke-dasharray="5 4" fill="none"/>
<path d="M331.6 45V97" stroke="#8fa59b" stroke-width="0.4" fill="none"/>
<path d="M331.6 37.6L334.6 45.4H328.6z" fill="#2cb754"/>
<rect x="329.3" y="43.6" width="4.6" height="2.2" rx="0.6" fill="#27a84b"/>
<path d="M344.3 69.2L376 68.6" stroke="#8d9898" stroke-width="0.6" fill="none"/>
<path d="M385.2 68.2L375.4 65.9L375.9 70.8z" fill="#e23b30"/>
<path d="M373.6 69.8L366.3 67.9L366.6 72.4z" fill="#2e6fe0"/>
<path d="M358.2 36.2V47" stroke="#c0605c" stroke-width="0.5" fill="none"/>
<path d="M363.3 36.2V43.4" stroke="#7f8aa8" stroke-width="0.5" fill="none"/>
<rect x="310.3" y="35.8" width="25.3" height="4.7" rx="0.8" fill="#b9c2c1"/>
<path d="M312.6 36.9L314.6 38.1L312.6 39.3z" fill="#e8eeee"/>
<rect x="18.6" y="35.9" width="13.6" height="4" rx="0.7" fill="#b3bcbb"/>
<rect x="17" y="155.3" width="15" height="4.8" rx="0.6" fill="#a3acab"/>
<rect x="23.5" y="156.3" width="7.5" height="2.8" rx="0.5" fill="#919a99"/>
<path d="M618 45.4H621.2M620.2 44.4L621.3 45.4L620.2 46.4" stroke="#8f9aa0" stroke-width="0.5" fill="none"/>
<path d="M624.8 42.6V48.4" stroke="#8a86c8" stroke-width="0.7" fill="none"/>
<path d="M624.6 48.8V61" stroke="#d49a9a" stroke-width="0.35" fill="none"/>
<rect x="593.4" y="399.4" width="34.6" height="4.8" rx="0.6" fill="#aab3b2" fill-opacity="0.75"/>
</svg>
<div id="txt">
<span class="t" style="left:24.7px;top:1.14px;font-size:15.2px;color:#e0e0e0;">未标题 1 *</span>
<span class="t" style="left:6px;top:9.04px;font-size:15.2px;color:#c4c4c4;">文件</span>
<span class="t" style="left:17.3px;top:9.04px;font-size:15.2px;color:#c4c4c4;">编辑</span>
<span class="t" style="left:29.3px;top:9.04px;font-size:15.2px;color:#c4c4c4;">创建</span>
<span class="t" style="left:41.3px;top:9.04px;font-size:15.2px;color:#c4c4c4;">模式</span>
<span class="t" style="left:53.2px;top:9.04px;font-size:15.2px;color:#c4c4c4;">选择</span>
<span class="t" style="left:65.2px;top:9.04px;font-size:15.2px;color:#c4c4c4;">工具</span>
<span class="t" style="left:77.2px;top:9.04px;font-size:15.2px;color:#c4c4c4;">样条</span>
<span class="t" style="left:88.8px;top:9.04px;font-size:15.2px;color:#e8cc48;">网格</span>
<span class="t" style="left:100.8px;top:9.04px;font-size:15.2px;color:#c4c4c4;">体积</span>
<span class="t" style="left:112.8px;top:9.04px;font-size:15.2px;color:#c4c4c4;">运动图形</span>
<span class="t" style="left:132.2px;top:9.04px;font-size:15.2px;color:#c4c4c4;">角色</span>
<span class="t" style="left:144.2px;top:9.04px;font-size:15.2px;color:#c4c4c4;">动画</span>
<span class="t" style="left:156.2px;top:9.04px;font-size:15.2px;color:#c4c4c4;">模拟</span>
<span class="t" style="left:167.8px;top:9.04px;font-size:15.2px;color:#c4c4c4;">跟踪器</span>
<span class="t" style="left:184px;top:9.04px;font-size:15.2px;color:#c4c4c4;">渲染</span>
<span class="t" style="left:195.8px;top:9.04px;font-size:15.2px;color:#e8cc48;">扩展</span>
<span class="t" style="left:207.4px;top:9.41px;font-size:14.8px;color:#c4c4c4;">RealFlow</span>
<span class="t" style="left:227.8px;top:9.41px;font-size:14.8px;color:#c4c4c4;">INSYDIUM</span>
<span class="t" style="left:251.4px;top:9.41px;font-size:14.8px;color:#c4c4c4;">Greyscalegorilla</span>
<span class="t" style="left:283.3px;top:9.41px;font-size:14.8px;color:#c4c4c4;">Octane</span>
<span class="t" style="left:300.4px;top:9.41px;font-size:14.8px;color:#c4c4c4;">Redshift</span>
<span class="t" style="left:320.2px;top:9.04px;font-size:15.2px;color:#c4c4c4;">窗口</span>
<span class="t" style="left:331.8px;top:9.04px;font-size:15.2px;color:#c4c4c4;">帮助</span>
<span class="t" style="left:491.6px;top:0.91px;font-size:14.8px;color:#f0f0f0;">启动 (用户)</span>
<span class="t" style="left:524px;top:0.92px;font-size:16px;color:#5a5a5a;">Standard</span>
<span class="t" style="left:553.8px;top:0.92px;font-size:16px;color:#5a5a5a;">Model</span>
<span class="t" style="left:578px;top:0.92px;font-size:16px;color:#5a5a5a;">Sculpt</span>
<span class="t" style="left:603.5px;top:0.92px;font-size:16px;color:#5a5a5a;">UV Edit</span>
<span class="t" style="left:630.5px;top:0.92px;font-size:16px;color:#5a5a5a;">Paint</span>
<span class="t" style="left:654.5px;top:0.92px;font-size:16px;color:#5a5a5a;">Rigging</span>
<span class="t" style="left:681.3px;top:0.92px;font-size:16px;color:#5a5a5a;">Animate</span>
<span class="t" style="left:710.5px;top:0.92px;font-size:16px;color:#5a5a5a;">Track</span>
<span class="t" style="left:734.7px;top:0.92px;font-size:16px;color:#5a5a5a;">Script</span>
<span class="t" style="left:759px;top:0.92px;font-size:16px;color:#5a5a5a;">Nodes</span>
<span class="t" style="left:784.3px;top:0.92px;font-size:16px;color:#5a5a5a;">Visualize</span>
<span class="t" style="left:827.2px;top:0.91px;font-size:14.8px;color:#e6e6e6;">新界面</span>
<span class="t tc" style="left:37.6px;top:18.77px;font-size:14.4px;color:#d8d8d8;">X</span>
<span class="t tc" style="left:46.7px;top:18.77px;font-size:14.4px;color:#d8d8d8;">Y</span>
<span class="t tc" style="left:55.9px;top:18.77px;font-size:14.4px;color:#d8d8d8;">Z</span>
<span class="t" style="left:27px;top:28.31px;font-size:14.8px;color:#c4c4c4;">查看</span>
<span class="t" style="left:39px;top:28.31px;font-size:14.8px;color:#c4c4c4;">摄像机</span>
<span class="t" style="left:54.6px;top:28.31px;font-size:14.8px;color:#c4c4c4;">显示</span>
<span class="t" style="left:66.4px;top:28.31px;font-size:14.8px;color:#c4c4c4;">选项</span>
<span class="t" style="left:78.2px;top:28.31px;font-size:14.8px;color:#c4c4c4;">过滤</span>
<span class="t" style="left:90px;top:28.31px;font-size:14.8px;color:#c4c4c4;">面板</span>
<span class="t" style="left:101.8px;top:28.67px;font-size:14.4px;color:#bcbcbc;">Redshift</span>
<span class="t" style="left:19.6px;top:36.1px;font-size:11.6px;color:#f2f6f6;">透视视图</span>
<span class="t" style="left:315.6px;top:36.3px;font-size:11.6px;color:#f2f6f6;">默认摄像机</span>
<span class="t" style="left:594.6px;top:399.75px;font-size:13.2px;color:#f0f4f4;">网格间距 : 50 cm</span>
<span class="t" style="left:647.6px;top:16.91px;font-size:14.8px;color:#e4e4e4;">对象</span>
<span class="t" style="left:664.4px;top:16.91px;font-size:14.8px;color:#6a6a6a;">场次</span>
<span class="t" style="left:655px;top:24.21px;font-size:14.8px;color:#cfcfcf;">文件</span>
<span class="t" style="left:667px;top:24.21px;font-size:14.8px;color:#cfcfcf;">编辑</span>
<span class="t" style="left:678.6px;top:24.21px;font-size:14.8px;color:#cfcfcf;">查看</span>
<span class="t" style="left:690.2px;top:24.21px;font-size:14.8px;color:#f0d24a;">对象</span>
<span class="t" style="left:702.2px;top:24.21px;font-size:14.8px;color:#cfcfcf;">标签</span>
<span class="t" style="left:714.6px;top:24.21px;font-size:14.8px;color:#cfcfcf;">书签</span>
<span class="t" style="left:656px;top:32.11px;font-size:14.8px;color:#f0b93a;">克隆</span>
<span class="t" style="left:660.3px;top:38.61px;font-size:14.8px;color:#e8943a;">宝石体</span>
<span class="t" style="left:656px;top:44.71px;font-size:14.8px;color:#d8d8d8;">球体</span>
<span class="wm" style="left:775.6px;top:46.2px;">榴芒大叔</span>
<span class="wm2" style="left:778.4px;top:67.2px;">C4D运动图形基础</span>
<span class="t" style="left:652.4px;top:154.05px;font-size:15.8px;color:#cccccc;">Greyscalegorilla Drop Zone</span>
<span class="t" style="left:729.4px;top:170.92px;font-size:16px;color:#4d4d4d;font-weight:bold;">DROP</span>
<span class="t" style="left:752.4px;top:170.92px;font-size:16px;color:#4d4d4d;font-weight:bold;">ZONE</span>
<span class="t" style="left:648.3px;top:182.32px;font-size:16px;color:#dcdcdc;">Attributes</span>
<span class="t" style="left:654.4px;top:189.61px;font-size:14.8px;color:#cfcfcf;">模式</span>
<span class="t" style="left:666.4px;top:189.61px;font-size:14.8px;color:#cfcfcf;">编辑</span>
<span class="t" style="left:678.2px;top:189.61px;font-size:14.8px;color:#cfcfcf;">用户数据</span>
<span class="t" style="left:654.2px;top:197.91px;font-size:14.8px;color:#d6d6d6;">克隆对象 [克隆]</span>
<span class="t" style="left:823.6px;top:197.91px;font-size:14.8px;color:#cfcfcf;">自定义</span>
<span class="t" style="left:647.6px;top:205.41px;font-size:14.8px;color:#cfcfcf;">基本</span>
<span class="t" style="left:661.4px;top:205.41px;font-size:14.8px;color:#cfcfcf;">坐标</span>
<span class="t" style="left:675.2px;top:205.41px;font-size:14.8px;color:#ffffff;">对象</span>
<span class="t" style="left:688.8px;top:205.41px;font-size:14.8px;color:#cfcfcf;">变换</span>
<span class="t" style="left:700.8px;top:205.41px;font-size:14.8px;color:#cfcfcf;">效果器</span>
<span class="t" style="left:646px;top:213.14px;font-size:15.2px;color:#ececec;font-weight:bold;">对象属性</span>
<span class="t" style="left:653.3px;top:219.71px;font-size:14.8px;color:#cfcfcf;">模式</span>
<span class="t" style="left:675px;top:219.71px;font-size:14.8px;color:#d8d8d8;">对象</span>
<span class="t" style="left:653.3px;top:228.71px;font-size:14.8px;color:#cfcfcf;">克隆</span>
<span class="t" style="left:672.6px;top:228.71px;font-size:14.8px;color:#d8d8d8;">迭代</span>
<span class="t" style="left:653.3px;top:234.61px;font-size:14.8px;color:#cfcfcf;">重设坐标</span>
<span class="t" style="left:653.3px;top:241.11px;font-size:14.8px;color:#cfcfcf;">固定纹理</span>
<span class="t" style="left:672.6px;top:241.11px;font-size:14.8px;color:#d8d8d8;">关闭</span>
<span class="t" style="left:653.3px;top:250.91px;font-size:14.8px;color:#cfcfcf;">实例模式</span>
<span class="t" style="left:673.8px;top:250.91px;font-size:14.8px;color:#ffffff;">实例</span>
<span class="t" style="left:687.6px;top:250.91px;font-size:14.8px;color:#cfcfcf;">渲染实例</span>
<span class="t" style="left:705.2px;top:250.91px;font-size:14.8px;color:#cfcfcf;">多重实例</span>
<span class="t" style="left:653.3px;top:257.41px;font-size:14.8px;color:#646464;">视窗模式</span>
<span class="t" style="left:672.6px;top:257.41px;font-size:14.8px;color:#646464;">对象</span>
<span class="t" style="left:655.4px;top:264.01px;font-size:14.8px;color:#cfcfcf;">对象</span>
<span class="t" style="left:672.8px;top:264.01px;font-size:14.8px;color:#d8d8d8;">球体</span>
<span class="t" style="left:653.3px;top:270.51px;font-size:14.8px;color:#cfcfcf;">排列克隆</span>
<span class="t" style="left:653.3px;top:278.71px;font-size:14.8px;color:#cfcfcf;">上行矢量</span>
<span class="t" style="left:672.6px;top:278.71px;font-size:14.8px;color:#d8d8d8;">无</span>
<span class="t" style="left:653.3px;top:285.21px;font-size:14.8px;color:#f0a030;">分布</span>
<span class="t" style="left:672.6px;top:285.21px;font-size:14.8px;color:#d8d8d8;">表面</span>
<span class="t" style="left:653.3px;top:294.81px;font-size:14.8px;color:#cfcfcf;">选集</span>
<span class="t" style="left:833px;top:294.81px;font-size:14.8px;color:#cfcfcf;">启用</span>
<span class="t" style="left:655.4px;top:301.61px;font-size:14.8px;color:#cfcfcf;">启用缩放</span>
<span class="t" style="left:690px;top:301.61px;font-size:14.8px;color:#646464;">缩放</span>
<span class="t tc" style="left:714.2px;top:301.67px;font-size:14.4px;color:#6e6e6e;">100 %</span>
<span class="t" style="left:653.3px;top:308.61px;font-size:14.8px;color:#cfcfcf;">种子</span>
<span class="t tc" style="left:677px;top:308.73px;font-size:14px;color:#d8d8d8;">1234726</span>
<span class="t" style="left:653.3px;top:315.81px;font-size:14.8px;color:#cfcfcf;">数量</span>
<span class="t tc" style="left:677px;top:315.93px;font-size:14px;color:#d8d8d8;">973</span>
<span class="t tc" style="left:322.4px;top:411.87px;font-size:14.4px;color:#d8d8d8;">0 F</span>
<span class="t tc" style="left:25.3px;top:421.12px;font-size:12.8px;color:#d0d0d0;">0</span>
<span class="t tc" style="left:38.62px;top:421.12px;font-size:12.8px;color:#a8a8a8;">2</span>
<span class="t tc" style="left:51.95px;top:421.12px;font-size:12.8px;color:#a8a8a8;">4</span>
<span class="t tc" style="left:65.27px;top:421.12px;font-size:12.8px;color:#a8a8a8;">6</span>
<span class="t tc" style="left:78.6px;top:421.12px;font-size:12.8px;color:#a8a8a8;">8</span>
<span class="t tc" style="left:91.92px;top:421.12px;font-size:12.8px;color:#a8a8a8;">10</span>
<span class="t tc" style="left:105.24px;top:421.12px;font-size:12.8px;color:#a8a8a8;">12</span>
<span class="t tc" style="left:118.57px;top:421.12px;font-size:12.8px;color:#a8a8a8;">14</span>
<span class="t tc" style="left:131.89px;top:421.12px;font-size:12.8px;color:#a8a8a8;">16</span>
<span class="t tc" style="left:145.22px;top:421.12px;font-size:12.8px;color:#a8a8a8;">18</span>
<span class="t tc" style="left:158.54px;top:421.12px;font-size:12.8px;color:#a8a8a8;">20</span>
<span class="t tc" style="left:171.86px;top:421.12px;font-size:12.8px;color:#a8a8a8;">22</span>
<span class="t tc" style="left:185.19px;top:421.12px;font-size:12.8px;color:#a8a8a8;">24</span>
<span class="t tc" style="left:198.51px;top:421.12px;font-size:12.8px;color:#a8a8a8;">26</span>
<span class="t tc" style="left:211.84px;top:421.12px;font-size:12.8px;color:#a8a8a8;">28</span>
<span class="t tc" style="left:225.16px;top:421.12px;font-size:12.8px;color:#d0d0d0;">30</span>
<span class="t tc" style="left:238.48px;top:421.12px;font-size:12.8px;color:#a8a8a8;">32</span>
<span class="t tc" style="left:251.81px;top:421.12px;font-size:12.8px;color:#a8a8a8;">34</span>
<span class="t tc" style="left:265.13px;top:421.12px;font-size:12.8px;color:#a8a8a8;">36</span>
<span class="t tc" style="left:278.46px;top:421.12px;font-size:12.8px;color:#a8a8a8;">38</span>
<span class="t tc" style="left:291.78px;top:421.12px;font-size:12.8px;color:#a8a8a8;">40</span>
<span class="t tc" style="left:305.1px;top:421.12px;font-size:12.8px;color:#a8a8a8;">42</span>
<span class="t tc" style="left:318.43px;top:421.12px;font-size:12.8px;color:#a8a8a8;">44</span>
<span class="t tc" style="left:331.75px;top:421.12px;font-size:12.8px;color:#a8a8a8;">46</span>
<span class="t tc" style="left:345.08px;top:421.12px;font-size:12.8px;color:#a8a8a8;">48</span>
<span class="t tc" style="left:358.4px;top:421.12px;font-size:12.8px;color:#a8a8a8;">50</span>
<span class="t tc" style="left:371.72px;top:421.12px;font-size:12.8px;color:#a8a8a8;">52</span>
<span class="t tc" style="left:385.05px;top:421.12px;font-size:12.8px;color:#a8a8a8;">54</span>
<span class="t tc" style="left:398.37px;top:421.12px;font-size:12.8px;color:#a8a8a8;">56</span>
<span class="t tc" style="left:411.7px;top:421.12px;font-size:12.8px;color:#a8a8a8;">58</span>
<span class="t tc" style="left:425.02px;top:421.12px;font-size:12.8px;color:#d0d0d0;">60</span>
<span class="t tc" style="left:438.34px;top:421.12px;font-size:12.8px;color:#a8a8a8;">62</span>
<span class="t tc" style="left:451.67px;top:421.12px;font-size:12.8px;color:#a8a8a8;">64</span>
<span class="t tc" style="left:464.99px;top:421.12px;font-size:12.8px;color:#a8a8a8;">66</span>
<span class="t tc" style="left:478.32px;top:421.12px;font-size:12.8px;color:#a8a8a8;">68</span>
<span class="t tc" style="left:491.64px;top:421.12px;font-size:12.8px;color:#a8a8a8;">70</span>
<span class="t tc" style="left:504.96px;top:421.12px;font-size:12.8px;color:#a8a8a8;">72</span>
<span class="t tc" style="left:518.29px;top:421.12px;font-size:12.8px;color:#a8a8a8;">74</span>
<span class="t tc" style="left:531.61px;top:421.12px;font-size:12.8px;color:#a8a8a8;">76</span>
<span class="t tc" style="left:544.94px;top:421.12px;font-size:12.8px;color:#a8a8a8;">78</span>
<span class="t tc" style="left:558.26px;top:421.12px;font-size:12.8px;color:#a8a8a8;">80</span>
<span class="t tc" style="left:571.58px;top:421.12px;font-size:12.8px;color:#a8a8a8;">82</span>
<span class="t tc" style="left:584.91px;top:421.12px;font-size:12.8px;color:#a8a8a8;">84</span>
<span class="t tc" style="left:598.23px;top:421.12px;font-size:12.8px;color:#a8a8a8;">86</span>
<span class="t tc" style="left:611.56px;top:421.12px;font-size:12.8px;color:#a8a8a8;">88</span>
<span class="t tc" style="left:624.88px;top:421.12px;font-size:12.8px;color:#d0d0d0;">90</span>
<span class="t tc" style="left:25.5px;top:421.12px;font-size:12.8px;color:#ffffff;">0</span>
<span class="t tc" style="left:35.4px;top:429.83px;font-size:14px;color:#d8d8d8;">0 F</span>
<span class="t" style="left:56px;top:429.83px;font-size:14px;color:#bdbdbd;">0 F</span>
<span class="t" style="left:585.2px;top:429.83px;font-size:14px;color:#bdbdbd;">90 F</span>
<span class="t tc" style="left:614px;top:429.83px;font-size:14px;color:#d8d8d8;">90 F</span>
<span class="t" style="left:12.6px;top:437.46px;font-size:14.48px;color:#bcbcbc;">移动: 点击并拖动鼠标移动元素。按住 SHIFT 键量化移动 / 节点编辑模式时按住 SHIFT 键增加选择对象；按住 CTRL 键减少选择对象。</span>
</div>
</div></body></html>
